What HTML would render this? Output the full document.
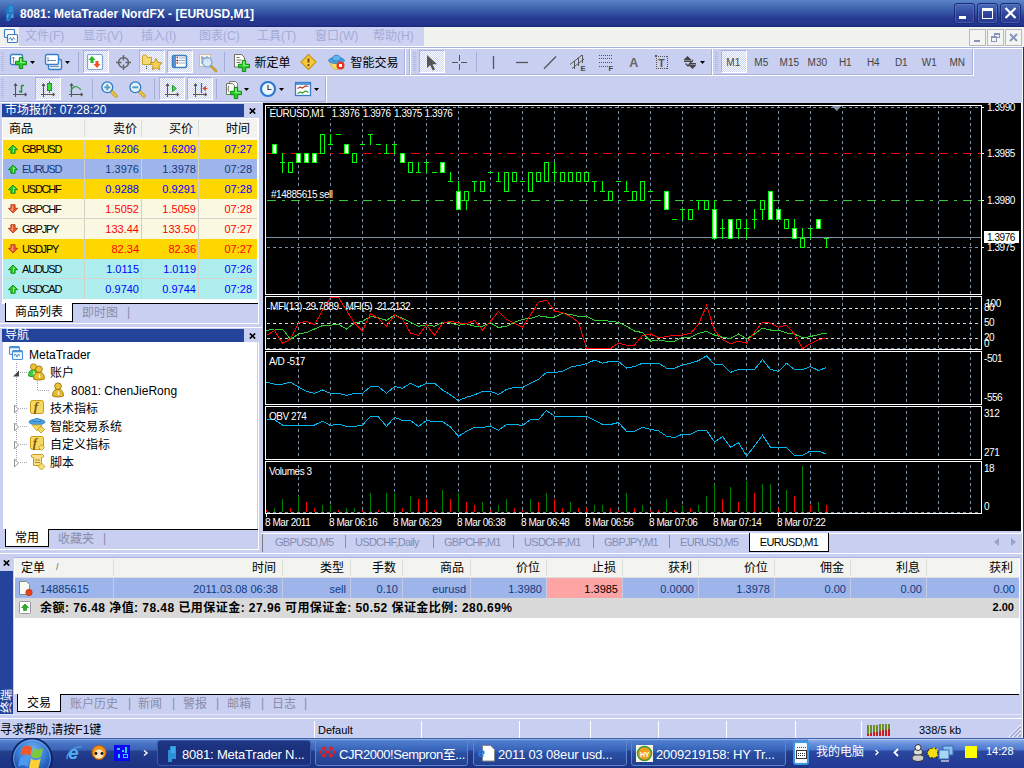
<!DOCTYPE html><html lang="zh"><head><meta charset="utf-8"><title>8081: MetaTrader NordFX - [EURUSD,M1]</title><style>
*{box-sizing:border-box;margin:0;padding:0}
html,body{width:1024px;height:768px;overflow:hidden;background:#c8cff1}
body{position:relative;font-family:"Liberation Sans","Noto Sans CJK SC",sans-serif;font-size:11px;color:#000;line-height:1}
.a{position:absolute;white-space:nowrap}
.cj{font-size:12px}
.r{text-align:right}
#title{left:0;top:0;width:1024px;height:27px;background:linear-gradient(#5c84ca 0,#5079bf 3px,#4067b0 8px,#3558a6 12px,#2b4498 16px,#26378e 19px,#25358d 25px,#1c287c 26px,#1c287c 27px)}
#title .t{left:20px;top:8px;font-weight:bold;font-size:12px;color:#fff}
.wb{top:3px;width:21px;height:21px;border:1px solid #1c2a7c;border-radius:3px;background:linear-gradient(#4a6cb8,#2c4098 60%,#2a3a92);box-shadow:inset 0 0 0 1px rgba(130,160,225,.3)}
#menu{left:0;top:27px;width:1024px;height:20px;background:#f1f1ee}
#menu .lav{left:19px;top:0;width:405px;height:19px;background:#cdd2f3}
#menu span{position:absolute;top:3px;font-size:12px;color:#a3acd6}
.mb{top:2px;width:17px;height:17px;border:1px solid #b8b8bc;background:#f4f4f2}
.hl{background:#fff;height:1px}
.vl{background:#fff;width:1px}
.pressed{background:repeating-conic-gradient(#fff 0% 25%,#ccd2f2 0% 50%) 0 0/2px 2px;border:1px solid;border-color:#aab2de #fff #fff #aab2de}
.grip{width:3px;background:repeating-linear-gradient(#b2b9e2 0,#b2b9e2 1px,transparent 1px,transparent 2px)}
.sep{width:1px;background:#a4acd8}
.tf{color:#444;font-size:11px}
.ptitle{background:#23449a;color:#fff;font-size:12px;height:13px}
.ptitle span{position:absolute;left:3px;top:0px}
.hdr{background:#f3f3ef}
.mw .row{left:3px;width:254px;height:20px}
.mw .row div{position:absolute;top:5px}
.tabact{background:#fff;border:1px solid #000;border-top:none;font-size:12px;text-align:center}
.gray{color:#888ca8;font-size:12px}
.tree div{position:absolute;font-size:12px}
.term .c{position:absolute;top:0;height:100%;border-left:1px solid #d4d4d4}
.term .row div.t{position:absolute;top:5px}
.tb{top:740px;height:26px;border-radius:3px;border:1px solid #5a84cc;background:linear-gradient(#4e7ccc,#3562b8 40%,#2a50a4 50%,#22408e);color:#fff;font-size:13px;letter-spacing:-.2px}
.tb span{position:absolute;top:7px}
</style></head><body>
<div id="title" class="a"><svg class="a" style="left:4px;top:4px" width="12" height="18"><path d="M4 1h6v13h-4v3h-4v-12h2z" fill="#2478c4"/><path d="M5 2h4v6h-4z" fill="#2e8ed8"/><path d="M3 9h4v6h-4z" fill="#1f72bc"/><path d="M3.500 10.500h2M3.500 12h1.500M3.500 10.500v3.500M7 10.500l2 3.500M9 10.500l-2 3.500" stroke="#6ab8f0" stroke-width=".7" fill="none"/></svg><div class="a t">8081: MetaTrader NordFX - [EURUSD,M1]</div>
<div class="a wb" style="left:954px"><div class="a" style="left:4px;top:12px;width:7px;height:3px;background:#fff"></div></div>
<div class="a wb" style="left:977px"><div class="a" style="left:4px;top:4px;width:11px;height:11px;border:1px solid #fff;border-top-width:3px"></div></div>
<div class="a wb" style="left:1000px"><svg class="a" style="left:3px;top:3px" width="13" height="12"><path d="M1.5 1L11.5 11M11.5 1L1.5 11" stroke="#fff" stroke-width="2.2"/></svg></div>
</div>
<div class="a" style="left:1023px;top:27px;width:1px;height:711px;background:#1c2f8c"></div>
<div class="a" style="left:1022px;top:47px;width:1px;height:691px;background:#f4f5fd"></div>
<div class="a" style="left:1021px;top:103px;width:1px;height:430px;background:#fff"></div>
<div id="menu" class="a"><div class="a lav"></div><svg class="a" style="left:3px;top:2px" width="16" height="16"><rect x="1.500" y=".5" width="10" height="8" rx="1" fill="#fff" stroke="#3b7ec8" stroke-width="1.200"/><rect x="4.500" y="5.500" width="10" height="8" rx="1" fill="#fff" stroke="#3b7ec8" stroke-width="1.200"/><path d="M6 10.500l1.500-2l1.500 3l1.500-3l1.500 2" stroke="#3b7ec8" fill="none" stroke-width=".9"/></svg>
<span style="left:25px">文件(F)</span>
<span style="left:83px">显示(V)</span>
<span style="left:141px">插入(I)</span>
<span style="left:199px">图表(C)</span>
<span style="left:257px">工具(T)</span>
<span style="left:315px">窗口(W)</span>
<span style="left:373px">帮助(H)</span>
<div class="a mb" style="left:969px"><div class="a" style="left:4px;top:10px;width:6px;height:2px;background:#8a96b8"></div></div>
<div class="a mb" style="left:987px"><div class="a" style="left:6px;top:3px;width:6px;height:5px;border:1px solid #8a96b8;border-top-width:2px"></div><div class="a" style="left:3px;top:6px;width:6px;height:6px;border:1px solid #8a96b8;border-top-width:2px;background:#f4f4f2"></div></div>
<div class="a mb" style="left:1005px"><svg class="a" style="left:3px;top:3px" width="9" height="9"><path d="M1 1L8 8M8 1L1 8" stroke="#8a96b8" stroke-width="2"/></svg></div>
</div>
<div class="a hl" style="left:0;top:46px;width:1023px"></div>
<div class="a" style="left:0;top:47px;width:1023px;height:1px;background:#aab1de"></div><div class="a hl" style="left:0;top:48px;width:1023px"></div><div class="a" style="left:0;top:74px;width:973px;height:1px;background:#aab1de"></div><div class="a" style="left:0;top:101px;width:326px;height:1px;background:#aab1de"></div><div class="a" style="left:404px;top:49px;width:1px;height:26px;background:#aab1de"></div><div class="a" style="left:409px;top:49px;width:1px;height:26px;background:#aab1de"></div><div class="a" style="left:711px;top:49px;width:1px;height:26px;background:#aab1de"></div><div class="a" style="left:972px;top:49px;width:1px;height:26px;background:#aab1de"></div><div class="a" style="left:325px;top:76px;width:1px;height:26px;background:#aab1de"></div><div class="a vl" style="left:410px;top:49px;height:26px"></div><div class="a hl" style="left:0;top:75px;width:974px"></div><div class="a hl" style="left:0;top:102px;width:262px"></div><div class="a vl" style="left:405px;top:48px;height:28px"></div><div class="a vl" style="left:712px;top:48px;height:28px"></div><div class="a vl" style="left:973px;top:48px;height:28px"></div><div class="a vl" style="left:326px;top:76px;height:27px"></div><div class="a grip" style="left:1px;top:52px;height:20px"></div><div class="a grip" style="left:413px;top:52px;height:20px"></div><div class="a grip" style="left:715px;top:52px;height:20px"></div><div class="a grip" style="left:1px;top:79px;height:20px"></div><div class="a pressed" style="left:83px;top:50px;width:26px;height:23px"></div><div class="a pressed" style="left:139px;top:50px;width:26px;height:23px"></div><div class="a pressed" style="left:167px;top:50px;width:26px;height:23px"></div><div class="a pressed" style="left:419px;top:50px;width:26px;height:23px"></div><div class="a pressed" style="left:721px;top:50px;width:26px;height:23px"></div><div class="a pressed" style="left:35px;top:77px;width:26px;height:23px"></div><div class="a pressed" style="left:159px;top:77px;width:26px;height:23px"></div><div class="a pressed" style="left:187px;top:77px;width:26px;height:23px"></div><svg class="a" style="left:0;top:0" width="1024" height="110" viewBox="0 0 1024 110" font-family="'Liberation Sans',sans-serif"><g transform="translate(10,54)"><rect x=".5" y=".5" width="12" height="10" rx="1.5" fill="#fff" stroke="#3b7ec8" stroke-width="1.4"/><path d="M3.5 3v6M2 4.5l1.5-1.5l1.5 1.5" stroke="#6a8ab8" fill="none"/></g><g transform="translate(21,63) scale(1.0)"><path d="M-1.700 -5.500h3.400v3.800h3.800v3.400h-3.800v3.800h-3.400v-3.800h-3.800v-3.400h3.800z" fill="#2bd02b" stroke="#0f8f0f" stroke-width="1" stroke-linejoin="miter"/><path d="M-.9 -4.700h1.500v3.800h3.800v.9h-5.300z" fill="#86f086" stroke="none"/></g><path d="M30 61h5l-2.500 3z" fill="#000"/><g transform="translate(45,54)"><rect x="3.5" y="5.500" width="13" height="10" rx="1.5" fill="#e8f0fa" stroke="#3b7ec8" stroke-width="1.4"/><rect x=".5" y=".5" width="13" height="10" rx="1.5" fill="#fff" stroke="#3b7ec8" stroke-width="1.4"/><path d="M3 3v5M3 6.500h8M5 12.500h9" stroke="#6a8ab8" fill="none"/></g><path d="M65 61h5l-2.500 3z" fill="#000"/><g transform="translate(87,54)"><rect x=".5" y=".5" width="15" height="15" rx="1.5" fill="#fdfdfd" stroke="#7aa6d8" stroke-width="1.2"/><path d="M5 2l3.500 4h-2v3h-3v-3h-2z" fill="#22b422"/><path d="M10 14l-3.500 -4h2v-3h3v3h2z" fill="#f0502a"/></g><g stroke="#666" fill="none" stroke-width="1.4"><circle cx="123.500" cy="62.500" r="5"/><path d="M123.500 55v5.500M123.500 64.500v5.500M116 62.500h5.500M125.500 62.500h5.500"/></g><g transform="translate(142,53)"><path d="M.5 4.500v7h9v-7h-4l-1.500 -2.500h-2.500l-1 1z" fill="#f6d977" stroke="#c9a227"/><path d="M4.500 13v4" stroke="#555" stroke-dasharray="1 1"/><path d="M14 5.500l1.800 3.800l4.200 .5l-3.100 2.900l.8 4.100l-3.700 -2l-3.700 2l.8 -4.100l-3.100 -2.900l4.200 -.5z" fill="#f5d04a" stroke="#b8901c" stroke-width=".9"/></g><g transform="translate(172,55)"><rect x=".5" y=".5" width="14" height="12" rx="1.5" fill="#fff" stroke="#3b7ec8" stroke-width="1.5"/><rect x="1" y="1" width="3" height="11" fill="#5a8fd0"/><path d="M6.500 3h7M6.500 5.500h7M6.500 8h7" stroke="#9ab"/><path d="M4.500 2.500h1.500M4.500 8h1.500" stroke="#e22" stroke-width="1.5"/><path d="M4.500 5.500h1.500" stroke="#222" stroke-width="1.500"/></g><g transform="translate(199,54)"><rect x=".5" y=".5" width="11" height="12" fill="#f8f6ee" stroke="#c8c0a8"/><path d="M3 2v8M8 2v6M2 4h8" stroke="#7a8aa8" fill="none"/><path d="M12 12L17 17" stroke="#c9a227" stroke-width="2.800" stroke-linecap="round"/><circle cx="8.300" cy="8.300" r="4.700" fill="#cfe6f6" fill-opacity=".8" stroke="#6aa6e0" stroke-width="1.100"/></g><rect x="78" y="52" width="1" height="20" fill="#a4acd8"/><rect x="224" y="52" width="1" height="20" fill="#a4acd8"/><g transform="translate(234,54)"><path d="M.5 .5h7l3 3v9.500h-10z" fill="#fbfbf6" stroke="#6e6e68"/><path d="M2.500 3.500h3M2.500 6h5M2.500 8.500h4" stroke="#777"/></g><g transform="translate(244,66) scale(1.0)"><path d="M-1.700 -5.500h3.400v3.800h3.800v3.400h-3.800v3.800h-3.400v-3.800h-3.800v-3.400h3.800z" fill="#2bd02b" stroke="#0f8f0f" stroke-width="1" stroke-linejoin="miter"/><path d="M-.9 -4.700h1.500v3.800h3.800v.9h-5.300z" fill="#86f086" stroke="none"/></g><text x="254.5" y="66.500" font-size="12px" font-family="'Liberation Sans','Noto Sans CJK SC',sans-serif" fill="#000">新定单</text><g transform="translate(308.500,62)"><path d="M0 -7.500L7.500 0L0 7.500L-7.500 0z" fill="#f7c93a" stroke="#c89a18" stroke-width="1.200" stroke-linejoin="round"/><path d="M0 -3.500v4" stroke="#6a4a10" stroke-width="2"/><circle cx="0" cy="3.200" r="1.100" fill="#6a4a10"/></g><g transform="translate(328,54)"><path d="M2.500 8.500c0 4 3 7 6 7s6-3 6-7z" fill="#f7d860" stroke="#d0a828" stroke-width=".8"/><ellipse cx="8.500" cy="6.500" rx="8" ry="3" fill="#4aa0e0" stroke="#2a78c0" stroke-width=".8"/><path d="M4 6c0-6.500 9-6.500 9 0c-2 1.200-7 1.200-9 0z" fill="#62b4ee" stroke="#2a78c0" stroke-width=".800"/><circle cx="12.500" cy="11.500" r="4" fill="#e43820"/><rect x="11" y="10" width="3" height="3" fill="#fff"/></g><text x="350.5" y="66.500" font-size="12px" font-family="'Liberation Sans','Noto Sans CJK SC',sans-serif" fill="#000">智能交易</text><path d="M427 55v13l3.200-3l2.500 5.500l2.300-1l-2.500-5.300h4.500z" fill="#555"/><path d="M459.500 55v6M459.500 64v6M452 62.500h6M461 62.500h6" stroke="#555" stroke-width="1"/><rect x="476" y="52" width="1" height="20" fill="#a4acd8"/><path d="M493.500 56v13" stroke="#555" stroke-width="1.300"/><path d="M516 62.500h12" stroke="#555" stroke-width="1.300"/><path d="M544 68.700L556 56.500" stroke="#555" stroke-width="1.300"/><g stroke="#555" stroke-width="1" fill="none"><path d="M570 64.500L582 55M572 68.500L584 59M574.500 61v8M578.500 58v8M582.500 55v8" /></g><text x="580.500" y="70.700" font-size="7.500px" font-weight="bold" fill="#444">E</text><g stroke="#555" stroke-dasharray="1 1"><path d="M599 55.500h13M599 58.500h13M599 62.500h13M599 66.500h9"/></g><text x="608.500" y="70.700" font-size="7.500px" font-weight="bold" fill="#444">F</text><text x="629.3" y="67" font-size="12.5px" font-weight="bold" fill="#666">A</text><path d="M656 56.500h12M656 68.500h12M656.500 56v13M667.500 56v13" fill="none" stroke="#555" stroke-dasharray="1 1"/><rect x="655" y="55" width="2" height="2" fill="#555"/><text x="658.2" y="66.500" font-size="10.5px" font-weight="bold" fill="#555">T</text><g fill="#444"><path d="M687.500 56l4 4h-8z"/><path d="M684 60.500h7v1.500h-7z"/><path d="M692.500 69l-4-4h8z"/><path d="M689 63h7v1.500h-7z"/><path d="M685.500 63.500l2.500 2.500l5-6" stroke="#444" fill="none" stroke-width="1.300"/></g><path d="M700 61h5l-2.500 3z" fill="#000"/><text x="733.3" y="66" font-size="10px" text-anchor="middle" fill="#444">M1</text><text x="761.3" y="66" font-size="10px" text-anchor="middle" fill="#444">M5</text><text x="789.3" y="66" font-size="10px" text-anchor="middle" fill="#444">M15</text><text x="817.3" y="66" font-size="10px" text-anchor="middle" fill="#444">M30</text><text x="845.3" y="66" font-size="10px" text-anchor="middle" fill="#444">H1</text><text x="873.3" y="66" font-size="10px" text-anchor="middle" fill="#444">H4</text><text x="901.3" y="66" font-size="10px" text-anchor="middle" fill="#444">D1</text><text x="929.3" y="66" font-size="10px" text-anchor="middle" fill="#444">W1</text><text x="957.3" y="66" font-size="10px" text-anchor="middle" fill="#444">MN</text><g transform="translate(13,83)" stroke="#555" fill="none" stroke-width="1.1"><path d="M2.500 0.800V14M0 11.500H13.500M1 2.800L2.500 0.800L4 2.800M11.800 10L13.500 11.500L11.800 13" shape-rendering="auto"/></g><path d="M21.500 85v8M21.500 85.500h2.500M21.500 91.500h-2.500" stroke="#1c9a1c" stroke-width="1.400" fill="none"/><g transform="translate(41,83)" stroke="#555" fill="none" stroke-width="1.1"><path d="M2.500 0.800V14M0 11.500H13.500M1 2.800L2.500 0.800L4 2.800M11.800 10L13.500 11.500L11.800 13" shape-rendering="auto"/></g><path d="M49.500 81v12" stroke="#1c9a1c"/><rect x="47.500" y="83.500" width="4" height="7" fill="#3fdc3f" stroke="#1c9a1c"/><g transform="translate(69,83)" stroke="#555" fill="none" stroke-width="1.1"><path d="M2.500 0.800V14M0 11.500H13.500M1 2.800L2.500 0.800L4 2.800M11.800 10L13.500 11.500L11.800 13" shape-rendering="auto"/></g><path d="M70.500 91.500c2.500-5.500 6-7 10.500-1.500" stroke="#2e9e2e" stroke-width="1.100" fill="none"/><g transform="translate(101,81)"><path d="M10.500 10.500L15 15" stroke="#b89020" stroke-width="3.400" stroke-linecap="round"/><path d="M10.500 10.500L15 15" stroke="#ecc83c" stroke-width="2" stroke-linecap="round"/><circle cx="6.300" cy="6.300" r="5.400" fill="#e4f5fa" stroke="#2f78c8" stroke-width="1.300"/><path d="M3.300 6.300h6" stroke="#5a9cc4" stroke-width="2"/><path d="M6.300 3.300v6" stroke="#5a9cc4" stroke-width="2"/></g><g transform="translate(129,81)"><path d="M10.500 10.500L15 15" stroke="#b89020" stroke-width="3.400" stroke-linecap="round"/><path d="M10.500 10.500L15 15" stroke="#ecc83c" stroke-width="2" stroke-linecap="round"/><circle cx="6.300" cy="6.300" r="5.400" fill="#e4f5fa" stroke="#2f78c8" stroke-width="1.300"/><path d="M3.300 6.300h6" stroke="#5a9cc4" stroke-width="2"/></g><rect x="92" y="79" width="1" height="20" fill="#a4acd8"/><rect x="154" y="79" width="1" height="20" fill="#a4acd8"/><rect x="216" y="79" width="1" height="20" fill="#a4acd8"/><g transform="translate(165,83)" stroke="#555" fill="none" stroke-width="1.1"><path d="M2.500 0.800V14M0 11.500H13.500M1 2.800L2.500 0.800L4 2.800M11.800 10L13.500 11.500L11.800 13" shape-rendering="auto"/></g><path d="M172.500 85.500l3.800 3l-3.800 3z" fill="#5ad85a" stroke="#16961a" stroke-width="1"/><g transform="translate(193,83)" stroke="#555" fill="none" stroke-width="1.1"><path d="M2.500 0.800V14M0 11.500H13.500M1 2.800L2.500 0.800L4 2.800M11.800 10L13.500 11.500L11.800 13" shape-rendering="auto"/></g><path d="M201.500 83v10" stroke="#2a6ab8" stroke-width="1.300"/><path d="M207.500 88.500h-4M205.500 86.500l-2.500 2l2.500 2z" stroke="#e0481a" fill="#e0481a" stroke-width="1"/><g transform="translate(226,81)"><path d="M3.500 .5h6l2 2v9h-8z" fill="#fbfbf6" stroke="#77776e"/><path d="M.5 2.500h6l2 2v9h-8z" fill="#fbfbf6" stroke="#77776e"/><path d="M3 5c-1 0-1 5 0 6" stroke="#666" fill="none"/></g><g transform="translate(236,93) scale(1.0)"><path d="M-1.700 -5.500h3.400v3.800h3.800v3.400h-3.800v3.800h-3.400v-3.800h-3.800v-3.400h3.800z" fill="#2bd02b" stroke="#0f8f0f" stroke-width="1" stroke-linejoin="miter"/><path d="M-.9 -4.700h1.500v3.800h3.800v.9h-5.300z" fill="#86f086" stroke="none"/></g><path d="M244 88h5l-2.500 3z" fill="#000"/><circle cx="268" cy="89" r="7" fill="#eef6fc" stroke="#2a7ad0" stroke-width="2.200"/><path d="M268 85v4.500h3.500" stroke="#444" fill="none" stroke-width="1.200"/><path d="M279 88h5l-2.500 3z" fill="#000"/><g transform="translate(295,82)"><rect x=".5" y=".5" width="15" height="13" fill="#fff" stroke="#3b7ec8" stroke-width="1.300"/><rect x="1" y="1" width="14" height="2" fill="#5a98dc"/><path d="M2.500 6.500l3-1.500l2 1l3-2l3 .500" stroke="#b83a2a" fill="none" stroke-width="1.200"/><path d="M2.500 11.500l3-1.500l2 1l3-2l3 1.500" stroke="#2e9e2e" fill="none" stroke-width="1.200"/></g><path d="M314 88h5l-2.500 3z" fill="#000"/></svg>
<div class="a mw" style="left:0;top:102px;width:263px;height:224px">
<div class="a ptitle" style="left:2px;top:2px;width:242px"><span>市场报价: 07:28:20</span></div>
<div class="a" style="left:249px;top:6px"><svg width="7" height="6" style="display:block"><path d="M.8 .5L6.200 5.500M6.200 .5L.8 5.500" stroke="#000" stroke-width="1.700"/></svg></div>
<div class="a" style="left:2px;top:16px;width:257px;height:186px;background:#fff"></div>
<div class="a hdr cj" style="left:3px;top:17px;width:254px;height:19px"><div class="a" style="left:6px;top:4px">商品</div><div class="a r" style="left:82px;width:52px;top:4px">卖价</div><div class="a r" style="left:139px;width:51px;top:4px">买价</div><div class="a r" style="left:196px;width:51px;top:4px">时间</div>
<div class="a" style="left:81px;top:1px;width:1px;height:17px;background:#dcdcd8"></div>
<div class="a" style="left:138px;top:1px;width:1px;height:17px;background:#dcdcd8"></div>
<div class="a" style="left:195px;top:1px;width:1px;height:17px;background:#dcdcd8"></div>
</div>
<div class="a row" style="top:37px;height:20px;background:#ffd700;color:#0000ff"><svg class="a" style="left:4px;top:5px" width="12" height="11"><path d="M6 1l4.700 4.700h-2.600v3.600h-4.200v-3.600h-2.600z" fill="#2cc02c" stroke="#128a12" stroke-width=".9"/><path d="M6 2.500l2.500 2.500h-1.500v3.500h-1z" fill="#8af08a"/></svg><div style="left:19px;color:#000;letter-spacing:-1.2px">GBPUSD</div><div class="r" style="left:82px;width:54px">1.6206</div><div class="r" style="left:139px;width:54px">1.6209</div><div class="r" style="left:196px;width:53px">07:27</div>
<div style="left:81px;top:0;width:1px;height:20px;background:#d0d0c8"></div>
<div style="left:138px;top:0;width:1px;height:20px;background:#d0d0c8"></div>
<div style="left:195px;top:0;width:1px;height:20px;background:#d0d0c8"></div>
</div>
<div class="a row" style="top:57px;height:20px;background:#9db5ea;color:#14387e"><svg class="a" style="left:4px;top:5px" width="12" height="11"><path d="M6 1l4.700 4.700h-2.600v3.600h-4.200v-3.600h-2.600z" fill="#2cc02c" stroke="#128a12" stroke-width=".9"/><path d="M6 2.500l2.500 2.500h-1.500v3.500h-1z" fill="#8af08a"/></svg><div style="left:19px;color:#14387e;letter-spacing:-1.2px">EURUSD</div><div class="r" style="left:82px;width:54px">1.3976</div><div class="r" style="left:139px;width:54px">1.3978</div><div class="r" style="left:196px;width:53px">07:28</div>
<div style="left:81px;top:0;width:1px;height:20px;background:#d0d0c8"></div>
<div style="left:138px;top:0;width:1px;height:20px;background:#d0d0c8"></div>
<div style="left:195px;top:0;width:1px;height:20px;background:#d0d0c8"></div>
</div>
<div class="a row" style="top:77px;height:20px;background:#ffd700;color:#0000ff"><svg class="a" style="left:4px;top:5px" width="12" height="11"><path d="M6 1l4.700 4.700h-2.600v3.600h-4.200v-3.600h-2.600z" fill="#2cc02c" stroke="#128a12" stroke-width=".9"/><path d="M6 2.500l2.500 2.500h-1.500v3.500h-1z" fill="#8af08a"/></svg><div style="left:19px;color:#000;letter-spacing:-1.2px">USDCHF</div><div class="r" style="left:82px;width:54px">0.9288</div><div class="r" style="left:139px;width:54px">0.9291</div><div class="r" style="left:196px;width:53px">07:28</div>
<div style="left:81px;top:0;width:1px;height:20px;background:#d0d0c8"></div>
<div style="left:138px;top:0;width:1px;height:20px;background:#d0d0c8"></div>
<div style="left:195px;top:0;width:1px;height:20px;background:#d0d0c8"></div>
</div>
<div class="a row" style="top:97px;height:20px;background:#fbf8e2;color:#ff0000"><svg class="a" style="left:4px;top:4px" width="12" height="11"><path d="M6 10l4.700-4.700h-2.600v-3.600h-4.200v3.600h-2.600z" fill="#f0582a" stroke="#b83a12" stroke-width=".9"/><path d="M6 8.500l-2.500-2.500h1.500v-3.500h1z" fill="#f8a080"/></svg><div style="left:19px;color:#000;letter-spacing:-1.2px">GBPCHF</div><div class="r" style="left:82px;width:54px">1.5052</div><div class="r" style="left:139px;width:54px">1.5059</div><div class="r" style="left:196px;width:53px">07:28</div>
<div style="left:81px;top:0;width:1px;height:20px;background:#d0d0c8"></div>
<div style="left:138px;top:0;width:1px;height:20px;background:#d0d0c8"></div>
<div style="left:195px;top:0;width:1px;height:20px;background:#d0d0c8"></div>
<div style="left:0;top:19px;width:254px;height:1px;background:#d4d4d0"></div>
</div>
<div class="a row" style="top:117px;height:20px;background:#fbf8e2;color:#ff0000"><svg class="a" style="left:4px;top:4px" width="12" height="11"><path d="M6 10l4.700-4.700h-2.600v-3.600h-4.200v3.600h-2.600z" fill="#f0582a" stroke="#b83a12" stroke-width=".9"/><path d="M6 8.500l-2.500-2.500h1.500v-3.500h1z" fill="#f8a080"/></svg><div style="left:19px;color:#000;letter-spacing:-1.2px">GBPJPY</div><div class="r" style="left:82px;width:54px">133.44</div><div class="r" style="left:139px;width:54px">133.50</div><div class="r" style="left:196px;width:53px">07:27</div>
<div style="left:81px;top:0;width:1px;height:20px;background:#d0d0c8"></div>
<div style="left:138px;top:0;width:1px;height:20px;background:#d0d0c8"></div>
<div style="left:195px;top:0;width:1px;height:20px;background:#d0d0c8"></div>
</div>
<div class="a row" style="top:137px;height:20px;background:#ffd700;color:#ff0000"><svg class="a" style="left:4px;top:4px" width="12" height="11"><path d="M6 10l4.700-4.700h-2.600v-3.600h-4.200v3.600h-2.600z" fill="#f0582a" stroke="#b83a12" stroke-width=".9"/><path d="M6 8.500l-2.500-2.500h1.500v-3.500h1z" fill="#f8a080"/></svg><div style="left:19px;color:#000;letter-spacing:-1.2px">USDJPY</div><div class="r" style="left:82px;width:54px">82.34</div><div class="r" style="left:139px;width:54px">82.36</div><div class="r" style="left:196px;width:53px">07:27</div>
<div style="left:81px;top:0;width:1px;height:20px;background:#d0d0c8"></div>
<div style="left:138px;top:0;width:1px;height:20px;background:#d0d0c8"></div>
<div style="left:195px;top:0;width:1px;height:20px;background:#d0d0c8"></div>
</div>
<div class="a row" style="top:157px;height:20px;background:#aeeeee;color:#0000ff"><svg class="a" style="left:4px;top:5px" width="12" height="11"><path d="M6 1l4.700 4.700h-2.600v3.600h-4.200v-3.600h-2.600z" fill="#2cc02c" stroke="#128a12" stroke-width=".9"/><path d="M6 2.500l2.500 2.500h-1.500v3.500h-1z" fill="#8af08a"/></svg><div style="left:19px;color:#000;letter-spacing:-1.2px">AUDUSD</div><div class="r" style="left:82px;width:54px">1.0115</div><div class="r" style="left:139px;width:54px">1.0119</div><div class="r" style="left:196px;width:53px">07:26</div>
<div style="left:81px;top:0;width:1px;height:20px;background:#d0d0c8"></div>
<div style="left:138px;top:0;width:1px;height:20px;background:#d0d0c8"></div>
<div style="left:195px;top:0;width:1px;height:20px;background:#d0d0c8"></div>
<div style="left:0;top:19px;width:254px;height:1px;background:#d4d4d0"></div>
</div>
<div class="a row" style="top:177px;height:20px;background:#aeeeee;color:#0000ff"><svg class="a" style="left:4px;top:5px" width="12" height="11"><path d="M6 1l4.700 4.700h-2.600v3.600h-4.200v-3.600h-2.600z" fill="#2cc02c" stroke="#128a12" stroke-width=".9"/><path d="M6 2.500l2.500 2.500h-1.500v3.500h-1z" fill="#8af08a"/></svg><div style="left:19px;color:#000;letter-spacing:-1.2px">USDCAD</div><div class="r" style="left:82px;width:54px">0.9740</div><div class="r" style="left:139px;width:54px">0.9744</div><div class="r" style="left:196px;width:53px">07:28</div>
<div style="left:81px;top:0;width:1px;height:20px;background:#d0d0c8"></div>
<div style="left:138px;top:0;width:1px;height:20px;background:#d0d0c8"></div>
<div style="left:195px;top:0;width:1px;height:20px;background:#d0d0c8"></div>
</div>
<div class="a" style="left:3px;top:37px;width:254px;height:1px;background:#f3f3ef"></div>
<div class="a" style="left:72px;top:201px;width:186px;height:1px;background:#000"></div>
<div class="a tabact" style="left:5px;top:201px;width:68px;height:19px;padding-top:3px">商品列表</div>
<div class="a gray" style="left:82px;top:205px">即时图</div><div class="a gray" style="left:127px;top:204px">|</div>
</div>
<div class="a vl" style="left:258px;top:118px;height:206px"></div><div class="a hl" style="left:0;top:323px;width:259px"></div><div class="a hl" style="left:0;top:327px;width:262px"></div><div class="a vl" style="left:258px;top:342px;height:208px"></div><div class="a hl" style="left:0;top:549px;width:259px"></div>
<div class="a" style="left:0;top:326px;width:263px;height:226px">
<div class="a ptitle" style="left:2px;top:3px;width:242px"><span>导航</span></div>
<div class="a" style="left:249px;top:7px"><svg width="7" height="6" style="display:block"><path d="M.8 .5L6.200 5.500M6.200 .5L.8 5.500" stroke="#000" stroke-width="1.700"/></svg></div>
<div class="a" style="left:3px;top:16px;width:254px;height:187px;background:#fff"></div>
<div class="tree"><svg class="a" style="left:0;top:0" width="263" height="226" viewBox="0 0 263 226"><g stroke="#a8a8b4" stroke-dasharray="1 1" fill="none"><path d="M16.500 37v100M20 46.500h7M37.500 55v9.500h12M20 82.500h7M20 100.500h7M20 118.500h7M20 136.500h7"/></g><g transform="translate(9,20)"><rect x=".5" y=".5" width="10" height="8" rx="1" fill="#f0f7fd" stroke="#4a90d8" stroke-width="1.100"/><path d="M1 1.500h9" stroke="#4a90d8" stroke-width="1.500"/><rect x="3.500" y="4.500" width="10" height="9" rx="1" fill="#f6fbff" stroke="#4a90d8" stroke-width="1.100"/><path d="M4 5.500h9" stroke="#4a90d8" stroke-width="1.500"/><path d="M5 10l1.500-2l1.500 3l1.500-3l1.500 2" stroke="#3b7ec8" fill="none" stroke-width=".9"/></g><path d="M19 44.500v6h-6z" fill="#444"/><path d="M14.500 79l4 4l-4 4z" fill="#fff" stroke="#888" stroke-width=".9"/><path d="M14.500 97l4 4l-4 4z" fill="#fff" stroke="#888" stroke-width=".9"/><path d="M14.500 115l4 4l-4 4z" fill="#fff" stroke="#888" stroke-width=".9"/><path d="M14.500 133l4 4l-4 4z" fill="#fff" stroke="#888" stroke-width=".9"/><g transform="translate(28,37) scale(0.92)"><path d="M.6 14C.6 8.800 2.800 7.300 6 7.300C9.200 7.300 11.400 8.800 11.400 14C9 15.300 3 15.300 .6 14z" fill="#3ccc3c" stroke="#1e8a1e" stroke-width=".9"/><circle cx="6" cy="4.200" r="3.300" fill="#ecc436" stroke="#9a7208" stroke-width=".9"/><path d="M6 8l1.600 3.800l-1.600 1.600l-.3-3z" fill="#fff8d8"/></g><g transform="translate(33,39) scale(1.0)"><path d="M.6 14C.6 8.800 2.800 7.300 6 7.300C9.200 7.300 11.400 8.800 11.400 14C9 15.300 3 15.300 .6 14z" fill="#e6bc2c" stroke="#9a7208" stroke-width=".9"/><circle cx="6" cy="4.200" r="3.300" fill="#ecc436" stroke="#9a7208" stroke-width=".9"/><path d="M6 8l1.600 3.800l-1.600 1.600l-.3-3z" fill="#fff8d8"/></g><g transform="translate(52,56) scale(1.0)"><path d="M.6 14C.6 8.800 2.800 7.300 6 7.300C9.200 7.300 11.400 8.800 11.400 14C9 15.300 3 15.300 .6 14z" fill="#e6bc2c" stroke="#9a7208" stroke-width=".9"/><circle cx="6" cy="4.200" r="3.300" fill="#ecc436" stroke="#9a7208" stroke-width=".9"/><path d="M6 8l1.600 3.800l-1.600 1.600l-.3-3z" fill="#fff8d8"/></g><g transform="translate(30,74)"><rect x=".5" y=".5" width="13" height="13" rx="2" fill="#f7d860" stroke="#c89a18"/><text x="3.800" y="11" font-size="13px" font-style="italic" font-weight="bold" font-family="'Liberation Serif',serif" fill="#7a5a10">f</text></g><g transform="translate(29,91)"><ellipse cx="8" cy="5" rx="8" ry="2.800" fill="#4aa0e0" stroke="#2a78c0" stroke-width=".800"/><path d="M4 4.500c0-4 8-4 8 0z" fill="#5ab0ec" stroke="#2a78c0" stroke-width=".800"/><path d="M3 8l5 6l5-6z" fill="#f7d860" stroke="#d0a828" stroke-width=".800"/><path d="M12 9l3.500 3.500l-3.500 3.500l-3.500-3.500z" fill="#f7d860" stroke="#b8901c" stroke-width=".800"/></g><g transform="translate(30,110)"><rect x=".5" y=".5" width="13" height="13" rx="2" fill="#f7d860" stroke="#c89a18"/><text x="2.800" y="10.500" font-size="13px" font-style="italic" font-weight="bold" font-family="'Liberation Serif',serif" fill="#7a5a10">f</text><path d="M11.500 8.500l3 3l-3 3l-3-3z" fill="#f7e070" stroke="#b8901c" stroke-width=".800"/></g><g transform="translate(30,128)"><path d="M2.500 .5h10c1.500 0 1.500 3 0 3h-1v8h-8v-8h-1c-1.500 0-1.500-3 0-3z" fill="#f7e08a" stroke="#c89a18"/><path d="M5 6h5M5 8.500h5" stroke="#b8901c"/><path d="M11.500 9l3.500 3.500l-3.500 3.500l-3.500-3.500z" fill="#f7e070" stroke="#b8901c" stroke-width=".800"/></g></svg>
<div class="" style="left:29px;top:23px">MetaTrader</div>
<div class="cj" style="left:50px;top:41px">账户</div>
<div class="" style="left:71px;top:59px">8081: ChenJieRong</div>
<div class="cj" style="left:50px;top:77px">技术指标</div>
<div class="cj" style="left:50px;top:95px">智能交易系统</div>
<div class="cj" style="left:50px;top:113px">自定义指标</div>
<div class="cj" style="left:50px;top:131px">脚本</div>
</div>
<div class="a" style="left:48px;top:203px;width:210px;height:1px;background:#000"></div>
<div class="a tabact" style="left:5px;top:203px;width:44px;height:18px;padding-top:3px">常用</div>
<div class="a gray" style="left:58px;top:207px">收藏夹</div><div class="a gray" style="left:103px;top:206px">|</div>
</div>
<svg class="chart" width="1024" height="768" viewBox="0 0 1024 768" style="position:absolute;left:0;top:0" shape-rendering="crispEdges" font-family="'Liberation Sans',sans-serif" font-size="10px" letter-spacing="-0.45px" fill="#fff">
<rect x="263" y="103" width="758" height="428" fill="#000"/>
<line x1="298.5" y1="106" x2="298.5" y2="294" stroke="#7890a8" stroke-dasharray="3 3" stroke-dashoffset="1"/>
<line x1="330.5" y1="106" x2="330.5" y2="294" stroke="#7890a8" stroke-dasharray="3 3" stroke-dashoffset="1"/>
<line x1="362.5" y1="106" x2="362.5" y2="294" stroke="#7890a8" stroke-dasharray="3 3" stroke-dashoffset="1"/>
<line x1="394.5" y1="106" x2="394.5" y2="294" stroke="#7890a8" stroke-dasharray="3 3" stroke-dashoffset="1"/>
<line x1="426.5" y1="106" x2="426.5" y2="294" stroke="#7890a8" stroke-dasharray="3 3" stroke-dashoffset="1"/>
<line x1="458.5" y1="106" x2="458.5" y2="294" stroke="#7890a8" stroke-dasharray="3 3" stroke-dashoffset="1"/>
<line x1="490.5" y1="106" x2="490.5" y2="294" stroke="#7890a8" stroke-dasharray="3 3" stroke-dashoffset="1"/>
<line x1="522.5" y1="106" x2="522.5" y2="294" stroke="#7890a8" stroke-dasharray="3 3" stroke-dashoffset="1"/>
<line x1="554.5" y1="106" x2="554.5" y2="294" stroke="#7890a8" stroke-dasharray="3 3" stroke-dashoffset="1"/>
<line x1="586.5" y1="106" x2="586.5" y2="294" stroke="#7890a8" stroke-dasharray="3 3" stroke-dashoffset="1"/>
<line x1="618.5" y1="106" x2="618.5" y2="294" stroke="#7890a8" stroke-dasharray="3 3" stroke-dashoffset="1"/>
<line x1="650.5" y1="106" x2="650.5" y2="294" stroke="#7890a8" stroke-dasharray="3 3" stroke-dashoffset="1"/>
<line x1="682.5" y1="106" x2="682.5" y2="294" stroke="#7890a8" stroke-dasharray="3 3" stroke-dashoffset="1"/>
<line x1="714.5" y1="106" x2="714.5" y2="294" stroke="#7890a8" stroke-dasharray="3 3" stroke-dashoffset="1"/>
<line x1="746.5" y1="106" x2="746.5" y2="294" stroke="#7890a8" stroke-dasharray="3 3" stroke-dashoffset="1"/>
<line x1="778.5" y1="106" x2="778.5" y2="294" stroke="#7890a8" stroke-dasharray="3 3" stroke-dashoffset="1"/>
<line x1="810.5" y1="106" x2="810.5" y2="294" stroke="#7890a8" stroke-dasharray="3 3" stroke-dashoffset="1"/>
<line x1="842.5" y1="106" x2="842.5" y2="294" stroke="#7890a8" stroke-dasharray="3 3" stroke-dashoffset="1"/>
<line x1="874.5" y1="106" x2="874.5" y2="294" stroke="#7890a8" stroke-dasharray="3 3" stroke-dashoffset="1"/>
<line x1="906.5" y1="106" x2="906.5" y2="294" stroke="#7890a8" stroke-dasharray="3 3" stroke-dashoffset="1"/>
<line x1="938.5" y1="106" x2="938.5" y2="294" stroke="#7890a8" stroke-dasharray="3 3" stroke-dashoffset="1"/>
<line x1="970.5" y1="106" x2="970.5" y2="294" stroke="#7890a8" stroke-dasharray="3 3" stroke-dashoffset="1"/>
<line x1="298.5" y1="297" x2="298.5" y2="349" stroke="#7890a8" stroke-dasharray="3 3" stroke-dashoffset="0"/>
<line x1="330.5" y1="297" x2="330.5" y2="349" stroke="#7890a8" stroke-dasharray="3 3" stroke-dashoffset="0"/>
<line x1="362.5" y1="297" x2="362.5" y2="349" stroke="#7890a8" stroke-dasharray="3 3" stroke-dashoffset="0"/>
<line x1="394.5" y1="297" x2="394.5" y2="349" stroke="#7890a8" stroke-dasharray="3 3" stroke-dashoffset="0"/>
<line x1="426.5" y1="297" x2="426.5" y2="349" stroke="#7890a8" stroke-dasharray="3 3" stroke-dashoffset="0"/>
<line x1="458.5" y1="297" x2="458.5" y2="349" stroke="#7890a8" stroke-dasharray="3 3" stroke-dashoffset="0"/>
<line x1="490.5" y1="297" x2="490.5" y2="349" stroke="#7890a8" stroke-dasharray="3 3" stroke-dashoffset="0"/>
<line x1="522.5" y1="297" x2="522.5" y2="349" stroke="#7890a8" stroke-dasharray="3 3" stroke-dashoffset="0"/>
<line x1="554.5" y1="297" x2="554.5" y2="349" stroke="#7890a8" stroke-dasharray="3 3" stroke-dashoffset="0"/>
<line x1="586.5" y1="297" x2="586.5" y2="349" stroke="#7890a8" stroke-dasharray="3 3" stroke-dashoffset="0"/>
<line x1="618.5" y1="297" x2="618.5" y2="349" stroke="#7890a8" stroke-dasharray="3 3" stroke-dashoffset="0"/>
<line x1="650.5" y1="297" x2="650.5" y2="349" stroke="#7890a8" stroke-dasharray="3 3" stroke-dashoffset="0"/>
<line x1="682.5" y1="297" x2="682.5" y2="349" stroke="#7890a8" stroke-dasharray="3 3" stroke-dashoffset="0"/>
<line x1="714.5" y1="297" x2="714.5" y2="349" stroke="#7890a8" stroke-dasharray="3 3" stroke-dashoffset="0"/>
<line x1="746.5" y1="297" x2="746.5" y2="349" stroke="#7890a8" stroke-dasharray="3 3" stroke-dashoffset="0"/>
<line x1="778.5" y1="297" x2="778.5" y2="349" stroke="#7890a8" stroke-dasharray="3 3" stroke-dashoffset="0"/>
<line x1="810.5" y1="297" x2="810.5" y2="349" stroke="#7890a8" stroke-dasharray="3 3" stroke-dashoffset="0"/>
<line x1="842.5" y1="297" x2="842.5" y2="349" stroke="#7890a8" stroke-dasharray="3 3" stroke-dashoffset="0"/>
<line x1="874.5" y1="297" x2="874.5" y2="349" stroke="#7890a8" stroke-dasharray="3 3" stroke-dashoffset="0"/>
<line x1="906.5" y1="297" x2="906.5" y2="349" stroke="#7890a8" stroke-dasharray="3 3" stroke-dashoffset="0"/>
<line x1="938.5" y1="297" x2="938.5" y2="349" stroke="#7890a8" stroke-dasharray="3 3" stroke-dashoffset="0"/>
<line x1="970.5" y1="297" x2="970.5" y2="349" stroke="#7890a8" stroke-dasharray="3 3" stroke-dashoffset="0"/>
<line x1="298.5" y1="352" x2="298.5" y2="404" stroke="#7890a8" stroke-dasharray="3 3" stroke-dashoffset="1"/>
<line x1="330.5" y1="352" x2="330.5" y2="404" stroke="#7890a8" stroke-dasharray="3 3" stroke-dashoffset="1"/>
<line x1="362.5" y1="352" x2="362.5" y2="404" stroke="#7890a8" stroke-dasharray="3 3" stroke-dashoffset="1"/>
<line x1="394.5" y1="352" x2="394.5" y2="404" stroke="#7890a8" stroke-dasharray="3 3" stroke-dashoffset="1"/>
<line x1="426.5" y1="352" x2="426.5" y2="404" stroke="#7890a8" stroke-dasharray="3 3" stroke-dashoffset="1"/>
<line x1="458.5" y1="352" x2="458.5" y2="404" stroke="#7890a8" stroke-dasharray="3 3" stroke-dashoffset="1"/>
<line x1="490.5" y1="352" x2="490.5" y2="404" stroke="#7890a8" stroke-dasharray="3 3" stroke-dashoffset="1"/>
<line x1="522.5" y1="352" x2="522.5" y2="404" stroke="#7890a8" stroke-dasharray="3 3" stroke-dashoffset="1"/>
<line x1="554.5" y1="352" x2="554.5" y2="404" stroke="#7890a8" stroke-dasharray="3 3" stroke-dashoffset="1"/>
<line x1="586.5" y1="352" x2="586.5" y2="404" stroke="#7890a8" stroke-dasharray="3 3" stroke-dashoffset="1"/>
<line x1="618.5" y1="352" x2="618.5" y2="404" stroke="#7890a8" stroke-dasharray="3 3" stroke-dashoffset="1"/>
<line x1="650.5" y1="352" x2="650.5" y2="404" stroke="#7890a8" stroke-dasharray="3 3" stroke-dashoffset="1"/>
<line x1="682.5" y1="352" x2="682.5" y2="404" stroke="#7890a8" stroke-dasharray="3 3" stroke-dashoffset="1"/>
<line x1="714.5" y1="352" x2="714.5" y2="404" stroke="#7890a8" stroke-dasharray="3 3" stroke-dashoffset="1"/>
<line x1="746.5" y1="352" x2="746.5" y2="404" stroke="#7890a8" stroke-dasharray="3 3" stroke-dashoffset="1"/>
<line x1="778.5" y1="352" x2="778.5" y2="404" stroke="#7890a8" stroke-dasharray="3 3" stroke-dashoffset="1"/>
<line x1="810.5" y1="352" x2="810.5" y2="404" stroke="#7890a8" stroke-dasharray="3 3" stroke-dashoffset="1"/>
<line x1="842.5" y1="352" x2="842.5" y2="404" stroke="#7890a8" stroke-dasharray="3 3" stroke-dashoffset="1"/>
<line x1="874.5" y1="352" x2="874.5" y2="404" stroke="#7890a8" stroke-dasharray="3 3" stroke-dashoffset="1"/>
<line x1="906.5" y1="352" x2="906.5" y2="404" stroke="#7890a8" stroke-dasharray="3 3" stroke-dashoffset="1"/>
<line x1="938.5" y1="352" x2="938.5" y2="404" stroke="#7890a8" stroke-dasharray="3 3" stroke-dashoffset="1"/>
<line x1="970.5" y1="352" x2="970.5" y2="404" stroke="#7890a8" stroke-dasharray="3 3" stroke-dashoffset="1"/>
<line x1="298.5" y1="407" x2="298.5" y2="459" stroke="#7890a8" stroke-dasharray="3 3" stroke-dashoffset="2"/>
<line x1="330.5" y1="407" x2="330.5" y2="459" stroke="#7890a8" stroke-dasharray="3 3" stroke-dashoffset="2"/>
<line x1="362.5" y1="407" x2="362.5" y2="459" stroke="#7890a8" stroke-dasharray="3 3" stroke-dashoffset="2"/>
<line x1="394.5" y1="407" x2="394.5" y2="459" stroke="#7890a8" stroke-dasharray="3 3" stroke-dashoffset="2"/>
<line x1="426.5" y1="407" x2="426.5" y2="459" stroke="#7890a8" stroke-dasharray="3 3" stroke-dashoffset="2"/>
<line x1="458.5" y1="407" x2="458.5" y2="459" stroke="#7890a8" stroke-dasharray="3 3" stroke-dashoffset="2"/>
<line x1="490.5" y1="407" x2="490.5" y2="459" stroke="#7890a8" stroke-dasharray="3 3" stroke-dashoffset="2"/>
<line x1="522.5" y1="407" x2="522.5" y2="459" stroke="#7890a8" stroke-dasharray="3 3" stroke-dashoffset="2"/>
<line x1="554.5" y1="407" x2="554.5" y2="459" stroke="#7890a8" stroke-dasharray="3 3" stroke-dashoffset="2"/>
<line x1="586.5" y1="407" x2="586.5" y2="459" stroke="#7890a8" stroke-dasharray="3 3" stroke-dashoffset="2"/>
<line x1="618.5" y1="407" x2="618.5" y2="459" stroke="#7890a8" stroke-dasharray="3 3" stroke-dashoffset="2"/>
<line x1="650.5" y1="407" x2="650.5" y2="459" stroke="#7890a8" stroke-dasharray="3 3" stroke-dashoffset="2"/>
<line x1="682.5" y1="407" x2="682.5" y2="459" stroke="#7890a8" stroke-dasharray="3 3" stroke-dashoffset="2"/>
<line x1="714.5" y1="407" x2="714.5" y2="459" stroke="#7890a8" stroke-dasharray="3 3" stroke-dashoffset="2"/>
<line x1="746.5" y1="407" x2="746.5" y2="459" stroke="#7890a8" stroke-dasharray="3 3" stroke-dashoffset="2"/>
<line x1="778.5" y1="407" x2="778.5" y2="459" stroke="#7890a8" stroke-dasharray="3 3" stroke-dashoffset="2"/>
<line x1="810.5" y1="407" x2="810.5" y2="459" stroke="#7890a8" stroke-dasharray="3 3" stroke-dashoffset="2"/>
<line x1="842.5" y1="407" x2="842.5" y2="459" stroke="#7890a8" stroke-dasharray="3 3" stroke-dashoffset="2"/>
<line x1="874.5" y1="407" x2="874.5" y2="459" stroke="#7890a8" stroke-dasharray="3 3" stroke-dashoffset="2"/>
<line x1="906.5" y1="407" x2="906.5" y2="459" stroke="#7890a8" stroke-dasharray="3 3" stroke-dashoffset="2"/>
<line x1="938.5" y1="407" x2="938.5" y2="459" stroke="#7890a8" stroke-dasharray="3 3" stroke-dashoffset="2"/>
<line x1="970.5" y1="407" x2="970.5" y2="459" stroke="#7890a8" stroke-dasharray="3 3" stroke-dashoffset="2"/>
<line x1="298.5" y1="462" x2="298.5" y2="513" stroke="#7890a8" stroke-dasharray="3 3" stroke-dashoffset="3"/>
<line x1="330.5" y1="462" x2="330.5" y2="513" stroke="#7890a8" stroke-dasharray="3 3" stroke-dashoffset="3"/>
<line x1="362.5" y1="462" x2="362.5" y2="513" stroke="#7890a8" stroke-dasharray="3 3" stroke-dashoffset="3"/>
<line x1="394.5" y1="462" x2="394.5" y2="513" stroke="#7890a8" stroke-dasharray="3 3" stroke-dashoffset="3"/>
<line x1="426.5" y1="462" x2="426.5" y2="513" stroke="#7890a8" stroke-dasharray="3 3" stroke-dashoffset="3"/>
<line x1="458.5" y1="462" x2="458.5" y2="513" stroke="#7890a8" stroke-dasharray="3 3" stroke-dashoffset="3"/>
<line x1="490.5" y1="462" x2="490.5" y2="513" stroke="#7890a8" stroke-dasharray="3 3" stroke-dashoffset="3"/>
<line x1="522.5" y1="462" x2="522.5" y2="513" stroke="#7890a8" stroke-dasharray="3 3" stroke-dashoffset="3"/>
<line x1="554.5" y1="462" x2="554.5" y2="513" stroke="#7890a8" stroke-dasharray="3 3" stroke-dashoffset="3"/>
<line x1="586.5" y1="462" x2="586.5" y2="513" stroke="#7890a8" stroke-dasharray="3 3" stroke-dashoffset="3"/>
<line x1="618.5" y1="462" x2="618.5" y2="513" stroke="#7890a8" stroke-dasharray="3 3" stroke-dashoffset="3"/>
<line x1="650.5" y1="462" x2="650.5" y2="513" stroke="#7890a8" stroke-dasharray="3 3" stroke-dashoffset="3"/>
<line x1="682.5" y1="462" x2="682.5" y2="513" stroke="#7890a8" stroke-dasharray="3 3" stroke-dashoffset="3"/>
<line x1="714.5" y1="462" x2="714.5" y2="513" stroke="#7890a8" stroke-dasharray="3 3" stroke-dashoffset="3"/>
<line x1="746.5" y1="462" x2="746.5" y2="513" stroke="#7890a8" stroke-dasharray="3 3" stroke-dashoffset="3"/>
<line x1="778.5" y1="462" x2="778.5" y2="513" stroke="#7890a8" stroke-dasharray="3 3" stroke-dashoffset="3"/>
<line x1="810.5" y1="462" x2="810.5" y2="513" stroke="#7890a8" stroke-dasharray="3 3" stroke-dashoffset="3"/>
<line x1="842.5" y1="462" x2="842.5" y2="513" stroke="#7890a8" stroke-dasharray="3 3" stroke-dashoffset="3"/>
<line x1="874.5" y1="462" x2="874.5" y2="513" stroke="#7890a8" stroke-dasharray="3 3" stroke-dashoffset="3"/>
<line x1="906.5" y1="462" x2="906.5" y2="513" stroke="#7890a8" stroke-dasharray="3 3" stroke-dashoffset="3"/>
<line x1="938.5" y1="462" x2="938.5" y2="513" stroke="#7890a8" stroke-dasharray="3 3" stroke-dashoffset="3"/>
<line x1="970.5" y1="462" x2="970.5" y2="513" stroke="#7890a8" stroke-dasharray="3 3" stroke-dashoffset="3"/>
<line x1="266" y1="107.5" x2="981" y2="107.5" stroke="#7890a8" stroke-dasharray="3 3" stroke-dashoffset="5"/>
<line x1="266" y1="247.5" x2="981" y2="247.5" stroke="#7890a8" stroke-dasharray="3 3" stroke-dashoffset="5"/>
<line x1="266" y1="153.5" x2="981" y2="153.5" stroke="#7890a8" stroke-dasharray="3 3" stroke-dashoffset="5"/>
<line x1="266" y1="200.5" x2="981" y2="200.5" stroke="#7890a8" stroke-dasharray="3 3" stroke-dashoffset="5"/>
<line x1="266" y1="308.5" x2="981" y2="308.5" stroke="#d8d8d8" stroke-dasharray="3 3" stroke-dashoffset="5"/>
<line x1="266" y1="323.5" x2="981" y2="323.5" stroke="#d8d8d8" stroke-dasharray="3 3" stroke-dashoffset="5"/>
<line x1="266" y1="338.5" x2="981" y2="338.5" stroke="#d8d8d8" stroke-dasharray="3 3" stroke-dashoffset="5"/>
<line x1="266" y1="512.5" x2="981" y2="512.5" stroke="#7890a8" stroke-dasharray="3 3" stroke-dashoffset="5"/>
<line x1="266" y1="348.5" x2="981" y2="348.5" stroke="#7890a8" stroke-dasharray="3 3" stroke-dashoffset="5"/>
<line x1="266" y1="153.5" x2="981" y2="153.5" stroke="#000"/>
<line x1="267" y1="153.5" x2="981" y2="153.5" stroke="#ff0000" stroke-dasharray="9 6 3 6"/>
<line x1="266" y1="200.5" x2="981" y2="200.5" stroke="#000"/>
<line x1="267" y1="200.5" x2="981" y2="200.5" stroke="#32cd32" stroke-dasharray="9 6 3 6"/>
<line x1="266" y1="237.5" x2="981" y2="237.5" stroke="#8090a0"/>
<rect x="274" y="144" width="1" height="10" fill="#00ff00"/>
<rect x="272" y="144" width="5" height="10" fill="#00ff00"/>
<rect x="273" y="145" width="3" height="8" fill="#fff"/>
<rect x="282" y="153" width="1" height="20" fill="#00ff00"/>
<rect x="280" y="162" width="5" height="1" fill="#00ff00"/>
<rect x="290" y="162" width="1" height="11" fill="#00ff00"/>
<rect x="288" y="162" width="5" height="11" fill="#00ff00"/>
<rect x="289" y="163" width="3" height="9" fill="#000"/>
<rect x="298" y="153" width="1" height="10" fill="#00ff00"/>
<rect x="296" y="153" width="5" height="10" fill="#00ff00"/>
<rect x="297" y="154" width="3" height="8" fill="#fff"/>
<rect x="306" y="153" width="1" height="10" fill="#00ff00"/>
<rect x="304" y="153" width="5" height="10" fill="#00ff00"/>
<rect x="305" y="154" width="3" height="8" fill="#fff"/>
<rect x="314" y="153" width="1" height="10" fill="#00ff00"/>
<rect x="312" y="153" width="5" height="10" fill="#00ff00"/>
<rect x="313" y="154" width="3" height="8" fill="#fff"/>
<rect x="322" y="134" width="1" height="20" fill="#00ff00"/>
<rect x="320" y="134" width="5" height="20" fill="#00ff00"/>
<rect x="321" y="135" width="3" height="18" fill="#000"/>
<rect x="330" y="134" width="1" height="11" fill="#00ff00"/>
<rect x="328" y="144" width="5" height="1" fill="#00ff00"/>
<rect x="336" y="134" width="5" height="1" fill="#00ff00"/>
<rect x="346" y="144" width="1" height="10" fill="#00ff00"/>
<rect x="344" y="144" width="5" height="10" fill="#00ff00"/>
<rect x="345" y="145" width="3" height="8" fill="#fff"/>
<rect x="354" y="153" width="1" height="10" fill="#00ff00"/>
<rect x="352" y="153" width="5" height="10" fill="#00ff00"/>
<rect x="353" y="154" width="3" height="8" fill="#000"/>
<rect x="360" y="144" width="5" height="1" fill="#00ff00"/>
<rect x="370" y="134" width="1" height="11" fill="#00ff00"/>
<rect x="368" y="134" width="5" height="1" fill="#00ff00"/>
<rect x="376" y="144" width="5" height="1" fill="#00ff00"/>
<rect x="386" y="144" width="1" height="10" fill="#00ff00"/>
<rect x="384" y="153" width="5" height="1" fill="#00ff00"/>
<rect x="394" y="144" width="1" height="10" fill="#00ff00"/>
<rect x="392" y="144" width="5" height="1" fill="#00ff00"/>
<rect x="402" y="153" width="1" height="10" fill="#00ff00"/>
<rect x="400" y="153" width="5" height="10" fill="#00ff00"/>
<rect x="401" y="154" width="3" height="8" fill="#fff"/>
<rect x="410" y="162" width="1" height="11" fill="#00ff00"/>
<rect x="408" y="162" width="5" height="11" fill="#00ff00"/>
<rect x="409" y="163" width="3" height="9" fill="#000"/>
<rect x="418" y="162" width="1" height="11" fill="#00ff00"/>
<rect x="416" y="172" width="5" height="1" fill="#00ff00"/>
<rect x="426" y="162" width="1" height="11" fill="#00ff00"/>
<rect x="424" y="162" width="5" height="1" fill="#00ff00"/>
<rect x="432" y="172" width="5" height="1" fill="#00ff00"/>
<rect x="442" y="162" width="1" height="11" fill="#00ff00"/>
<rect x="440" y="162" width="5" height="11" fill="#00ff00"/>
<rect x="441" y="163" width="3" height="9" fill="#fff"/>
<rect x="450" y="172" width="1" height="10" fill="#00ff00"/>
<rect x="448" y="181" width="5" height="1" fill="#00ff00"/>
<rect x="458" y="181" width="1" height="29" fill="#00ff00"/>
<rect x="456" y="191" width="5" height="19" fill="#00ff00"/>
<rect x="457" y="192" width="3" height="17" fill="#fff"/>
<rect x="466" y="191" width="1" height="19" fill="#00ff00"/>
<rect x="464" y="191" width="5" height="10" fill="#00ff00"/>
<rect x="465" y="192" width="3" height="8" fill="#000"/>
<rect x="474" y="181" width="1" height="11" fill="#00ff00"/>
<rect x="472" y="181" width="5" height="1" fill="#00ff00"/>
<rect x="482" y="181" width="1" height="11" fill="#00ff00"/>
<rect x="480" y="181" width="5" height="11" fill="#00ff00"/>
<rect x="481" y="182" width="3" height="9" fill="#000"/>
<rect x="488" y="172" width="5" height="1" fill="#00ff00"/>
<rect x="498" y="172" width="1" height="10" fill="#00ff00"/>
<rect x="496" y="181" width="5" height="1" fill="#00ff00"/>
<rect x="506" y="172" width="1" height="20" fill="#00ff00"/>
<rect x="504" y="172" width="5" height="20" fill="#00ff00"/>
<rect x="505" y="173" width="3" height="18" fill="#000"/>
<rect x="514" y="172" width="1" height="10" fill="#00ff00"/>
<rect x="512" y="172" width="5" height="10" fill="#00ff00"/>
<rect x="513" y="173" width="3" height="8" fill="#000"/>
<rect x="520" y="181" width="5" height="1" fill="#00ff00"/>
<rect x="530" y="172" width="1" height="20" fill="#00ff00"/>
<rect x="528" y="172" width="5" height="20" fill="#00ff00"/>
<rect x="529" y="173" width="3" height="18" fill="#000"/>
<rect x="538" y="172" width="1" height="10" fill="#00ff00"/>
<rect x="536" y="172" width="5" height="10" fill="#00ff00"/>
<rect x="537" y="173" width="3" height="8" fill="#000"/>
<rect x="546" y="162" width="1" height="20" fill="#00ff00"/>
<rect x="544" y="162" width="5" height="20" fill="#00ff00"/>
<rect x="545" y="163" width="3" height="18" fill="#000"/>
<rect x="554" y="162" width="1" height="20" fill="#00ff00"/>
<rect x="552" y="172" width="5" height="1" fill="#00ff00"/>
<rect x="562" y="172" width="1" height="10" fill="#00ff00"/>
<rect x="560" y="172" width="5" height="10" fill="#00ff00"/>
<rect x="561" y="173" width="3" height="8" fill="#000"/>
<rect x="570" y="172" width="1" height="10" fill="#00ff00"/>
<rect x="568" y="172" width="5" height="10" fill="#00ff00"/>
<rect x="569" y="173" width="3" height="8" fill="#000"/>
<rect x="578" y="172" width="1" height="10" fill="#00ff00"/>
<rect x="576" y="172" width="5" height="10" fill="#00ff00"/>
<rect x="577" y="173" width="3" height="8" fill="#000"/>
<rect x="586" y="172" width="1" height="10" fill="#00ff00"/>
<rect x="584" y="172" width="5" height="10" fill="#00ff00"/>
<rect x="585" y="173" width="3" height="8" fill="#000"/>
<rect x="594" y="181" width="1" height="11" fill="#00ff00"/>
<rect x="592" y="181" width="5" height="1" fill="#00ff00"/>
<rect x="602" y="181" width="1" height="11" fill="#00ff00"/>
<rect x="600" y="191" width="5" height="1" fill="#00ff00"/>
<rect x="610" y="191" width="1" height="10" fill="#00ff00"/>
<rect x="608" y="191" width="5" height="10" fill="#00ff00"/>
<rect x="609" y="192" width="3" height="8" fill="#000"/>
<rect x="616" y="181" width="5" height="1" fill="#00ff00"/>
<rect x="626" y="181" width="1" height="11" fill="#00ff00"/>
<rect x="624" y="191" width="5" height="1" fill="#00ff00"/>
<rect x="634" y="191" width="1" height="10" fill="#00ff00"/>
<rect x="632" y="191" width="5" height="10" fill="#00ff00"/>
<rect x="633" y="192" width="3" height="8" fill="#000"/>
<rect x="642" y="181" width="1" height="20" fill="#00ff00"/>
<rect x="640" y="181" width="5" height="20" fill="#00ff00"/>
<rect x="641" y="182" width="3" height="18" fill="#000"/>
<rect x="648" y="191" width="5" height="1" fill="#00ff00"/>
<rect x="656" y="200" width="5" height="1" fill="#00ff00"/>
<rect x="666" y="191" width="1" height="19" fill="#00ff00"/>
<rect x="664" y="191" width="5" height="19" fill="#00ff00"/>
<rect x="665" y="192" width="3" height="17" fill="#fff"/>
<rect x="672" y="219" width="5" height="1" fill="#00ff00"/>
<rect x="682" y="209" width="1" height="11" fill="#00ff00"/>
<rect x="680" y="209" width="5" height="1" fill="#00ff00"/>
<rect x="690" y="209" width="1" height="11" fill="#00ff00"/>
<rect x="688" y="209" width="5" height="11" fill="#00ff00"/>
<rect x="689" y="210" width="3" height="9" fill="#000"/>
<rect x="698" y="200" width="1" height="10" fill="#00ff00"/>
<rect x="696" y="200" width="5" height="1" fill="#00ff00"/>
<rect x="706" y="200" width="1" height="10" fill="#00ff00"/>
<rect x="704" y="200" width="5" height="10" fill="#00ff00"/>
<rect x="705" y="201" width="3" height="8" fill="#000"/>
<rect x="714" y="200" width="1" height="39" fill="#00ff00"/>
<rect x="712" y="209" width="5" height="30" fill="#00ff00"/>
<rect x="713" y="210" width="3" height="28" fill="#fff"/>
<rect x="722" y="219" width="1" height="20" fill="#00ff00"/>
<rect x="720" y="228" width="5" height="1" fill="#00ff00"/>
<rect x="730" y="219" width="1" height="20" fill="#00ff00"/>
<rect x="728" y="219" width="5" height="20" fill="#00ff00"/>
<rect x="729" y="220" width="3" height="18" fill="#fff"/>
<rect x="738" y="219" width="1" height="20" fill="#00ff00"/>
<rect x="736" y="219" width="5" height="10" fill="#00ff00"/>
<rect x="737" y="220" width="3" height="8" fill="#000"/>
<rect x="746" y="219" width="1" height="20" fill="#00ff00"/>
<rect x="744" y="228" width="5" height="1" fill="#00ff00"/>
<rect x="754" y="209" width="1" height="20" fill="#00ff00"/>
<rect x="752" y="219" width="5" height="1" fill="#00ff00"/>
<rect x="762" y="200" width="1" height="20" fill="#00ff00"/>
<rect x="760" y="200" width="5" height="10" fill="#00ff00"/>
<rect x="761" y="201" width="3" height="8" fill="#000"/>
<rect x="770" y="191" width="1" height="29" fill="#00ff00"/>
<rect x="768" y="191" width="5" height="29" fill="#00ff00"/>
<rect x="769" y="192" width="3" height="27" fill="#fff"/>
<rect x="778" y="209" width="1" height="11" fill="#00ff00"/>
<rect x="776" y="209" width="5" height="11" fill="#00ff00"/>
<rect x="777" y="210" width="3" height="9" fill="#fff"/>
<rect x="786" y="219" width="1" height="10" fill="#00ff00"/>
<rect x="784" y="219" width="5" height="10" fill="#00ff00"/>
<rect x="785" y="220" width="3" height="8" fill="#000"/>
<rect x="794" y="219" width="1" height="20" fill="#00ff00"/>
<rect x="792" y="228" width="5" height="11" fill="#00ff00"/>
<rect x="793" y="229" width="3" height="9" fill="#fff"/>
<rect x="802" y="228" width="1" height="20" fill="#00ff00"/>
<rect x="800" y="238" width="5" height="10" fill="#00ff00"/>
<rect x="801" y="239" width="3" height="8" fill="#000"/>
<rect x="810" y="228" width="1" height="11" fill="#00ff00"/>
<rect x="808" y="228" width="5" height="1" fill="#00ff00"/>
<rect x="818" y="219" width="1" height="10" fill="#00ff00"/>
<rect x="816" y="219" width="5" height="10" fill="#00ff00"/>
<rect x="817" y="220" width="3" height="8" fill="#fff"/>
<rect x="826" y="238" width="1" height="10" fill="#00ff00"/>
<rect x="824" y="238" width="5" height="1" fill="#00ff00"/>
<polyline points="266.5,330.5 274.5,329.0 282.5,329.0 290.5,339.5 298.5,334.0 306.5,332.6 314.5,329.0 322.5,325.6 330.5,325.2 338.5,324.2 346.5,329.0 354.5,323.2 362.5,321.3 370.5,316.4 378.5,317.8 386.5,320.3 394.5,315.0 402.5,318.4 410.5,322.3 418.5,326.2 426.5,325.2 434.5,326.2 442.5,322.3 450.5,322.9 458.5,325.2 466.5,323.8 474.5,326.2 482.5,326.2 490.5,322.9 498.5,327.5 506.5,326.2 514.5,322.3 522.5,319.3 530.5,318.4 538.5,315.8 546.5,317.0 554.5,317.0 562.5,313.5 570.5,314.5 578.5,316.4 586.5,316.4 594.5,320.3 602.5,320.3 610.5,321.3 618.5,322.3 626.5,326.2 634.5,331.0 642.5,332.6 650.5,341.2 658.5,339.9 666.5,341.2 674.5,341.2 682.5,337.3 690.5,337.3 698.5,333.4 706.5,331.5 714.5,335.0 722.5,337.3 730.5,338.5 738.5,334.0 746.5,338.9 754.5,334.0 762.5,328.1 770.5,330.0 778.5,330.0 786.5,333.0 794.5,334.0 802.5,337.9 810.5,336.5 818.5,334.6 826.5,333.0" fill="none" stroke="#32cd32" stroke-width="1" shape-rendering="crispEdges"/>
<polyline points="266.5,335.4 274.5,330.5 282.5,343.4 290.5,338.9 298.5,323.2 306.5,321.3 314.5,324.8 322.5,310.5 330.5,297.3 338.5,297.3 346.5,310.5 354.5,323.2 362.5,331.0 370.5,313.5 378.5,318.4 386.5,326.2 394.5,315.0 402.5,319.3 410.5,333.0 418.5,335.4 426.5,324.8 434.5,335.4 442.5,323.2 450.5,321.3 458.5,322.9 466.5,323.8 474.5,320.3 482.5,330.0 490.5,321.3 498.5,311.5 506.5,319.3 514.5,323.2 522.5,327.2 530.5,315.0 538.5,302.2 546.5,300.2 554.5,311.0 562.5,312.9 570.5,316.4 578.5,322.3 586.5,348.2 594.5,348.2 602.5,348.2 610.5,348.2 618.5,343.2 626.5,345.1 634.5,345.1 642.5,335.4 650.5,334.0 658.5,337.9 666.5,336.5 674.5,335.4 682.5,335.0 690.5,333.4 698.5,324.2 706.5,305.7 714.5,330.0 722.5,339.9 730.5,343.8 738.5,341.2 746.5,343.2 754.5,332.0 762.5,322.3 770.5,323.2 778.5,327.2 786.5,325.2 794.5,334.0 802.5,348.2 810.5,343.8 818.5,339.9 826.5,337.9" fill="none" stroke="#ff0000" stroke-width="1" shape-rendering="crispEdges"/>
<polyline points="266.5,382.2 274.5,384.1 282.5,384.1 290.5,382.2 298.5,387.0 306.5,391.4 314.5,393.3 322.5,390.0 330.5,393.3 338.5,393.3 346.5,395.3 354.5,393.3 362.5,393.3 370.5,386.5 378.5,386.5 386.5,393.3 394.5,386.5 402.5,388.4 410.5,383.2 418.5,387.0 426.5,383.2 434.5,383.2 442.5,390.0 450.5,394.9 458.5,400.7 466.5,397.2 474.5,394.9 482.5,391.4 490.5,391.4 498.5,394.5 506.5,389.4 514.5,387.5 522.5,387.5 530.5,383.2 538.5,379.2 546.5,372.4 554.5,372.4 562.5,371.4 570.5,367.1 578.5,365.6 586.5,363.6 594.5,360.1 602.5,363.2 610.5,361.3 618.5,361.3 626.5,368.1 634.5,366.6 642.5,363.2 650.5,363.2 658.5,363.2 666.5,368.1 674.5,368.1 682.5,365.2 690.5,363.2 698.5,360.7 706.5,355.8 714.5,364.6 722.5,364.6 730.5,372.4 738.5,369.5 746.5,369.5 754.5,369.5 762.5,359.7 770.5,369.5 778.5,371.4 786.5,363.2 794.5,369.5 802.5,369.5 810.5,366.6 818.5,370.5 826.5,367.5" fill="none" stroke="#00b4f0" stroke-width="1" shape-rendering="crispEdges"/>
<polyline points="266.5,419.6 274.5,419.6 282.5,425.0 290.5,425.0 298.5,425.0 306.5,425.0 314.5,425.0 322.5,421.2 330.5,425.5 338.5,424.1 346.5,426.4 354.5,426.4 362.5,425.0 370.5,416.3 378.5,417.0 386.5,426.4 394.5,417.3 402.5,420.6 410.5,420.6 418.5,426.4 426.5,420.6 434.5,421.6 442.5,421.6 450.5,427.0 458.5,436.2 466.5,431.3 474.5,427.4 482.5,427.4 490.5,426.0 498.5,430.3 506.5,424.5 514.5,424.5 522.5,425.5 530.5,419.6 538.5,419.6 546.5,410.4 554.5,416.3 562.5,416.3 570.5,416.3 578.5,416.3 586.5,416.3 594.5,420.2 602.5,424.5 610.5,424.5 618.5,422.5 626.5,431.3 634.5,431.3 642.5,427.4 650.5,429.4 658.5,430.9 666.5,436.2 674.5,437.6 682.5,434.2 690.5,434.2 698.5,430.3 706.5,430.3 714.5,442.0 722.5,436.6 730.5,447.3 738.5,442.6 746.5,456.1 754.5,446.0 762.5,435.2 770.5,447.3 778.5,447.3 786.5,447.3 794.5,455.3 802.5,455.3 810.5,451.0 818.5,451.0 826.5,454.2" fill="none" stroke="#00b4f0" stroke-width="1" shape-rendering="crispEdges"/>
<rect x="266" y="510" width="1" height="2" fill="#ff0000"/>
<rect x="274" y="508" width="1" height="4" fill="#008000"/>
<rect x="282" y="499" width="1" height="13" fill="#008000"/>
<rect x="290" y="508" width="1" height="4" fill="#ff0000"/>
<rect x="298" y="496" width="1" height="16" fill="#008000"/>
<rect x="306" y="502" width="1" height="10" fill="#ff0000"/>
<rect x="314" y="508" width="1" height="4" fill="#ff0000"/>
<rect x="322" y="505" width="1" height="7" fill="#008000"/>
<rect x="330" y="505" width="1" height="7" fill="#008000"/>
<rect x="338" y="510" width="1" height="2" fill="#ff0000"/>
<rect x="346" y="508" width="1" height="4" fill="#008000"/>
<rect x="354" y="508" width="1" height="4" fill="#008000"/>
<rect x="362" y="510" width="1" height="2" fill="#ff0000"/>
<rect x="370" y="493" width="1" height="19" fill="#008000"/>
<rect x="378" y="510" width="1" height="2" fill="#ff0000"/>
<rect x="386" y="493" width="1" height="19" fill="#008000"/>
<rect x="394" y="493" width="1" height="19" fill="#008000"/>
<rect x="402" y="508" width="1" height="4" fill="#ff0000"/>
<rect x="410" y="496" width="1" height="16" fill="#008000"/>
<rect x="418" y="499" width="1" height="13" fill="#ff0000"/>
<rect x="426" y="499" width="1" height="13" fill="#ff0000"/>
<rect x="434" y="510" width="1" height="2" fill="#ff0000"/>
<rect x="442" y="490" width="1" height="22" fill="#008000"/>
<rect x="450" y="499" width="1" height="13" fill="#ff0000"/>
<rect x="458" y="493" width="1" height="19" fill="#008000"/>
<rect x="466" y="502" width="1" height="10" fill="#ff0000"/>
<rect x="474" y="505" width="1" height="7" fill="#ff0000"/>
<rect x="482" y="502" width="1" height="10" fill="#008000"/>
<rect x="490" y="510" width="1" height="2" fill="#ff0000"/>
<rect x="498" y="505" width="1" height="7" fill="#008000"/>
<rect x="506" y="499" width="1" height="13" fill="#008000"/>
<rect x="514" y="508" width="1" height="4" fill="#ff0000"/>
<rect x="522" y="510" width="1" height="2" fill="#ff0000"/>
<rect x="530" y="499" width="1" height="13" fill="#008000"/>
<rect x="538" y="502" width="1" height="10" fill="#ff0000"/>
<rect x="546" y="493" width="1" height="19" fill="#008000"/>
<rect x="554" y="499" width="1" height="13" fill="#ff0000"/>
<rect x="562" y="508" width="1" height="4" fill="#ff0000"/>
<rect x="570" y="502" width="1" height="10" fill="#008000"/>
<rect x="578" y="508" width="1" height="4" fill="#ff0000"/>
<rect x="586" y="508" width="1" height="4" fill="#ff0000"/>
<rect x="594" y="505" width="1" height="7" fill="#008000"/>
<rect x="602" y="505" width="1" height="7" fill="#008000"/>
<rect x="610" y="508" width="1" height="4" fill="#ff0000"/>
<rect x="618" y="510" width="1" height="2" fill="#ff0000"/>
<rect x="626" y="493" width="1" height="19" fill="#008000"/>
<rect x="634" y="508" width="1" height="4" fill="#ff0000"/>
<rect x="642" y="505" width="1" height="7" fill="#008000"/>
<rect x="650" y="510" width="1" height="2" fill="#ff0000"/>
<rect x="658" y="510" width="1" height="2" fill="#ff0000"/>
<rect x="666" y="499" width="1" height="13" fill="#008000"/>
<rect x="674" y="510" width="1" height="2" fill="#ff0000"/>
<rect x="682" y="505" width="1" height="7" fill="#008000"/>
<rect x="690" y="508" width="1" height="4" fill="#ff0000"/>
<rect x="698" y="505" width="1" height="7" fill="#008000"/>
<rect x="706" y="496" width="1" height="16" fill="#008000"/>
<rect x="714" y="484" width="1" height="28" fill="#008000"/>
<rect x="722" y="499" width="1" height="13" fill="#ff0000"/>
<rect x="730" y="487" width="1" height="25" fill="#008000"/>
<rect x="738" y="502" width="1" height="10" fill="#ff0000"/>
<rect x="746" y="481" width="1" height="31" fill="#008000"/>
<rect x="754" y="493" width="1" height="19" fill="#ff0000"/>
<rect x="762" y="484" width="1" height="28" fill="#008000"/>
<rect x="770" y="484" width="1" height="28" fill="#008000"/>
<rect x="778" y="508" width="1" height="4" fill="#ff0000"/>
<rect x="786" y="490" width="1" height="22" fill="#008000"/>
<rect x="794" y="496" width="1" height="16" fill="#ff0000"/>
<rect x="802" y="466" width="1" height="46" fill="#008000"/>
<rect x="810" y="505" width="1" height="7" fill="#ff0000"/>
<rect x="818" y="502" width="1" height="10" fill="#008000"/>
<rect x="826" y="505" width="1" height="7" fill="#ff0000"/>
<path d="M265.5 294.5V105.5H981.5V294.5" fill="none" stroke="#fff"/>
<line x1="265" y1="294.5" x2="982" y2="294.5" stroke="#fff"/>
<path d="M265.5 349.5V296.5H981.5V349.5" fill="none" stroke="#fff"/>
<line x1="265" y1="349.5" x2="982" y2="349.5" stroke="#fff"/>
<path d="M265.5 404.5V351.5H981.5V404.5" fill="none" stroke="#fff"/>
<line x1="265" y1="404.5" x2="982" y2="404.5" stroke="#fff"/>
<path d="M265.5 459.5V406.5H981.5V459.5" fill="none" stroke="#fff"/>
<line x1="265" y1="459.5" x2="982" y2="459.5" stroke="#fff"/>
<path d="M265.5 513.5V461.5H981.5V513.5" fill="none" stroke="#fff"/>
<line x1="265" y1="513.5" x2="982" y2="513.5" stroke="#fff"/>
<rect x="266" y="514" width="1" height="3" fill="#fff"/>
<text x="265" y="526">8 Mar 2011</text>
<rect x="330" y="514" width="1" height="3" fill="#fff"/>
<text x="329" y="526">8 Mar 06:16</text>
<rect x="394" y="514" width="1" height="3" fill="#fff"/>
<text x="393" y="526">8 Mar 06:29</text>
<rect x="458" y="514" width="1" height="3" fill="#fff"/>
<text x="457" y="526">8 Mar 06:38</text>
<rect x="522" y="514" width="1" height="3" fill="#fff"/>
<text x="521" y="526">8 Mar 06:48</text>
<rect x="586" y="514" width="1" height="3" fill="#fff"/>
<text x="585" y="526">8 Mar 06:56</text>
<rect x="650" y="514" width="1" height="3" fill="#fff"/>
<text x="649" y="526">8 Mar 07:06</text>
<rect x="714" y="514" width="1" height="3" fill="#fff"/>
<text x="713" y="526">8 Mar 07:14</text>
<rect x="778" y="514" width="1" height="3" fill="#fff"/>
<text x="777" y="526">8 Mar 07:22</text>
<rect x="982" y="107" width="2" height="1" fill="#fff"/>
<text x="987" y="110.5">1.3990</text>
<rect x="982" y="153" width="2" height="1" fill="#fff"/>
<text x="987" y="156.5">1.3985</text>
<rect x="982" y="200" width="2" height="1" fill="#fff"/>
<text x="987" y="203.5">1.3980</text>
<rect x="982" y="247" width="2" height="1" fill="#fff"/>
<text x="987" y="250.5">1.3975</text>
<rect x="984" y="231" width="35" height="12" fill="#fff"/>
<text x="987" y="240.5" fill="#000">1.3976</text>
<text x="985.5" y="306.5">100</text>
<text x="984" y="310.5">80</text>
<text x="984" y="325.5">50</text>
<text x="984" y="340.5">20</text>
<text x="984" y="346.5">0</text>
<text x="984" y="362.0">-501</text>
<text x="984" y="401.0">-556</text>
<text x="984" y="417.0">312</text>
<text x="984" y="455.5">271</text>
<text x="984" y="472.0">18</text>
<text x="984" y="510.0">0</text>
<rect x="268" y="108" width="185" height="11" fill="#000"/>
<text y="116.5"><tspan x="269.5">EURUSD,M1</tspan><tspan x="331.5">1.3976</tspan><tspan x="362.7">1.3976</tspan><tspan x="394">1.3975</tspan><tspan x="424.6">1.3976</tspan></text>
<rect x="270" y="189" width="65" height="10" fill="#000"/><text x="271" y="197.5">#14885615 sell</text>
<text y="309.5"><tspan x="270">MFI(13)</tspan><tspan x="305.5">29.7889</tspan><tspan x="345.5">MFI(5)</tspan><tspan x="377">21.2132</tspan></text>
<text x="269" y="364.5">A/D -517</text>
<text x="269" y="419.5">OBV 274</text>
<text x="269" y="474.5">Volumes 3</text>
<path d="M832 106h9.500l-4.750 5z" fill="#8494a6" shape-rendering="auto"/>
</svg>
<div class="a" style="left:262px;top:534px;width:1px;height:18px;background:#7c7c84"></div><div class="a" style="left:263px;top:533px;width:758px;height:19px;font-size:11px;color:#858cb2;letter-spacing:-.7px">
<div class="a" style="left:-2px;top:0;width:760px;height:1px;background:#fff"></div>
<div class="a" style="left:12px;top:4px">GBPUSD,M5</div>
<div class="a" style="left:92px;top:4px">USDCHF,Daily</div>
<div class="a" style="left:181px;top:4px">GBPCHF,M1</div>
<div class="a" style="left:261px;top:4px">USDCHF,M1</div>
<div class="a" style="left:341px;top:4px">GBPJPY,M1</div>
<div class="a" style="left:417px;top:4px">EURUSD,M5</div>
<div class="a" style="left:82px;top:2px;width:1px;height:13px;background:#8890b8"></div>
<div class="a" style="left:170px;top:2px;width:1px;height:13px;background:#8890b8"></div>
<div class="a" style="left:250px;top:2px;width:1px;height:13px;background:#8890b8"></div>
<div class="a" style="left:330px;top:2px;width:1px;height:13px;background:#8890b8"></div>
<div class="a" style="left:406px;top:2px;width:1px;height:13px;background:#8890b8"></div>
<div class="a" style="left:486px;top:0;width:80px;height:19px;background:#fff;border:1px solid #000;border-top:none;color:#000;text-align:center;padding-top:4px">EURUSD,M1</div>
<div class="a" style="left:731px;top:5px;width:0;height:0;border:4px solid transparent;border-right:5px solid #9aa2c6;border-left:none"></div>
<div class="a" style="left:748px;top:5px;width:0;height:0;border:4px solid transparent;border-left:5px solid #9aa2c6;border-right:none"></div>
</div>
<div class="a hl" style="left:0;top:553px;width:1023px"></div>
<div class="a term" style="left:0;top:556px;width:1023px;height:158px">
<div class="a" style="left:0;top:15px;width:13px;height:143px;background:#23449a"></div>
<div class="a" style="left:3px;top:4px"><svg width="7" height="6" style="display:block"><path d="M.8 .5L6.200 5.500M6.200 .5L.8 5.500" stroke="#000" stroke-width="1.700"/></svg></div>
<div class="a" style="left:1px;top:157px;color:#fff;font-size:12px;line-height:13px;height:13px;transform-origin:0 0;transform:rotate(-90deg)">终端</div>
<div class="a" style="left:14px;top:1px;width:1006px;height:137px;background:#fff;border-top:1px solid #aab2dc"></div>
<div class="a hdr cj" style="left:15px;top:2px;width:1004px;height:20px;border-bottom:1px solid #dedede">
<div class="a" style="left:6px;top:4px">定单</div><div class="a" style="left:41px;top:5px;color:#666;font-size:9px">/</div>
<div class="a" style="left:98px;top:1px;width:1px;height:17px;background:#dcdcd8"></div>
<div class="a r" style="left:98px;width:163px;top:4px">时间</div>
<div class="a" style="left:267px;top:1px;width:1px;height:17px;background:#dcdcd8"></div>
<div class="a r" style="left:267px;width:62px;top:4px">类型</div>
<div class="a" style="left:335px;top:1px;width:1px;height:17px;background:#dcdcd8"></div>
<div class="a r" style="left:335px;width:46px;top:4px">手数</div>
<div class="a" style="left:387px;top:1px;width:1px;height:17px;background:#dcdcd8"></div>
<div class="a r" style="left:387px;width:62px;top:4px">商品</div>
<div class="a" style="left:455px;top:1px;width:1px;height:17px;background:#dcdcd8"></div>
<div class="a r" style="left:455px;width:70px;top:4px">价位</div>
<div class="a" style="left:531px;top:1px;width:1px;height:17px;background:#dcdcd8"></div>
<div class="a r" style="left:531px;width:70px;top:4px">止损</div>
<div class="a" style="left:607px;top:1px;width:1px;height:17px;background:#dcdcd8"></div>
<div class="a r" style="left:607px;width:70px;top:4px">获利</div>
<div class="a" style="left:683px;top:1px;width:1px;height:17px;background:#dcdcd8"></div>
<div class="a r" style="left:683px;width:70px;top:4px">价位</div>
<div class="a" style="left:759px;top:1px;width:1px;height:17px;background:#dcdcd8"></div>
<div class="a r" style="left:759px;width:70px;top:4px">佣金</div>
<div class="a" style="left:835px;top:1px;width:1px;height:17px;background:#dcdcd8"></div>
<div class="a r" style="left:835px;width:70px;top:4px">利息</div>
<div class="a" style="left:911px;top:1px;width:1px;height:17px;background:#dcdcd8"></div>
<div class="a r" style="left:911px;width:87px;top:4px">获利</div>
</div>
<div class="a row" style="left:15px;top:22px;width:1004px;height:20px;background:#9db5ea;color:#14387e"><svg class="a" style="left:4px;top:3px" width="15" height="16"><path d="M.5 .5h7l3 3v10h-10z" fill="#fbfbf6" stroke="#8a8a80"/><circle cx="10" cy="11.500" r="3.200" fill="#e8401c" stroke="#b02a10" stroke-width=".600"/></svg>
<div class="a" style="left:25px;top:6px">14885615</div>
<div class="a" style="left:98px;top:0;width:169px;height:20px;border-left:1px solid #c4cce4"></div>
<div class="a r" style="left:98px;width:165px;top:6px">2011.03.08 06:38</div>
<div class="a" style="left:267px;top:0;width:68px;height:20px;border-left:1px solid #c4cce4"></div>
<div class="a r" style="left:267px;width:64px;top:6px">sell</div>
<div class="a" style="left:335px;top:0;width:52px;height:20px;border-left:1px solid #c4cce4"></div>
<div class="a r" style="left:335px;width:48px;top:6px">0.10</div>
<div class="a" style="left:387px;top:0;width:68px;height:20px;border-left:1px solid #c4cce4"></div>
<div class="a r" style="left:387px;width:64px;top:6px">eurusd</div>
<div class="a" style="left:455px;top:0;width:76px;height:20px;border-left:1px solid #c4cce4"></div>
<div class="a r" style="left:455px;width:72px;top:6px">1.3980</div>
<div class="a" style="left:531px;top:0;width:76px;height:20px;border-left:1px solid #c4cce4;background:#ffa4a4"></div>
<div class="a r" style="left:531px;width:72px;top:6px;color:#000">1.3985</div>
<div class="a" style="left:607px;top:0;width:76px;height:20px;border-left:1px solid #c4cce4"></div>
<div class="a r" style="left:607px;width:72px;top:6px">0.0000</div>
<div class="a" style="left:683px;top:0;width:76px;height:20px;border-left:1px solid #c4cce4"></div>
<div class="a r" style="left:683px;width:72px;top:6px">1.3978</div>
<div class="a" style="left:759px;top:0;width:76px;height:20px;border-left:1px solid #c4cce4"></div>
<div class="a r" style="left:759px;width:72px;top:6px">0.00</div>
<div class="a" style="left:835px;top:0;width:76px;height:20px;border-left:1px solid #c4cce4"></div>
<div class="a r" style="left:835px;width:72px;top:6px">0.00</div>
<div class="a" style="left:911px;top:0;width:93px;height:20px;border-left:1px solid #c4cce4"></div>
<div class="a r" style="left:911px;width:89px;top:6px">0.00</div>
</div>
<div class="a" style="left:15px;top:42px;width:1004px;height:20px;background:#d9d9d9;font-weight:bold;font-size:12px"><svg class="a" style="left:4px;top:3px" width="13" height="14"><rect x=".5" y=".5" width="11" height="12" rx="1" fill="#fff" stroke="#9a9a9a"/><path d="M6 3l3.500 3.500h-2v3h-3v-3h-2z" fill="#22b422" stroke="#128a12" stroke-width=".600"/></svg><div class="a" style="left:25px;top:4px;letter-spacing:.45px">余额: 76.48  净值: 78.48  已用保证金: 27.96  可用保证金: 50.52  保证金比例: 280.69%</div><div class="a r" style="left:900px;width:99px;top:4px;font-size:11px">2.00</div></div>
<div class="a" style="left:61px;top:138px;width:958px;height:1px;background:#000"></div>
<div class="a tabact" style="left:17px;top:138px;width:44px;height:18px;padding-top:3px">交易</div>
<div class="a gray" style="left:70px;top:142px">账户历史</div>
<div class="a gray" style="left:138px;top:142px">新闻</div>
<div class="a gray" style="left:183px;top:142px">警报</div>
<div class="a gray" style="left:227px;top:142px">邮箱</div>
<div class="a gray" style="left:272px;top:142px">日志</div>
<div class="a gray" style="left:128px;top:141px">|</div>
<div class="a gray" style="left:172px;top:141px">|</div>
<div class="a gray" style="left:216px;top:141px">|</div>
<div class="a gray" style="left:261px;top:141px">|</div>
<div class="a gray" style="left:304px;top:141px">|</div>
</div>
<div class="a" style="left:0;top:714px;width:1023px;height:1px;background:#e6e9fb"></div><div class="a hl" style="left:0;top:718px;width:1023px"></div>
<div class="a" style="left:0;top:718px;width:1023px;height:20px;font-size:11px">
<div class="a cj" style="left:0;top:6px;font-size:12px">寻求帮助,请按F1键</div><div class="a" style="left:318px;top:7px">Default</div>
<div class="a vl" style="left:314px;top:3px;height:17px"></div>
<div class="a vl" style="left:421px;top:3px;height:17px"></div>
<div class="a vl" style="left:519px;top:3px;height:17px"></div>
<div class="a vl" style="left:590px;top:3px;height:17px"></div>
<div class="a vl" style="left:658px;top:3px;height:17px"></div>
<div class="a vl" style="left:726px;top:3px;height:17px"></div>
<div class="a vl" style="left:795px;top:3px;height:17px"></div>
<div class="a vl" style="left:861px;top:3px;height:17px"></div>
<svg class="a" style="left:867px;top:6px" width="24" height="13"><rect x="0" y="1" width="2" height="9" fill="#6a8e23"/><rect x="0" y="10" width="2" height="2" fill="#c81e1e"/><rect x="3" y="1" width="2" height="8" fill="#6a8e23"/><rect x="3" y="9" width="2" height="3" fill="#c81e1e"/><rect x="6" y="1" width="2" height="7" fill="#6a8e23"/><rect x="6" y="8" width="2" height="4" fill="#c81e1e"/><rect x="9" y="1" width="2" height="7" fill="#6a8e23"/><rect x="9" y="8" width="2" height="4" fill="#c81e1e"/><rect x="12" y="0" width="2" height="7" fill="#6a8e23"/><rect x="12" y="7" width="2" height="5" fill="#c81e1e"/><rect x="15" y="0" width="2" height="6" fill="#6a8e23"/><rect x="15" y="6" width="2" height="6" fill="#c81e1e"/><rect x="18" y="0" width="2" height="6" fill="#6a8e23"/><rect x="18" y="6" width="2" height="6" fill="#c81e1e"/><rect x="21" y="0" width="2" height="5" fill="#6a8e23"/><rect x="21" y="5" width="2" height="7" fill="#c81e1e"/></svg>
<div class="a" style="left:919px;top:7px">338/5 kb</div>
<svg class="a" style="left:1008px;top:6px" width="13" height="13"><path d="M13 1L1 13M13 5L5 13M13 9L9 13" stroke="#fff" stroke-width="1.200"/><path d="M13 2.200L2.200 13M13 6.200L6.200 13M13 10.200L10.200 13" stroke="#9aa2cc" stroke-width="1.400"/></svg>
</div>
<div class="a" style="left:0;top:738px;width:1024px;height:30px;background:linear-gradient(#3c64aa 0,#3c64aa 1px,#86a6e4 1px,#86a6e4 2px,#5a86d2 2px,#4672c4 6px,#3a62b6 12px,#24428e 13px,#20398a 18px,#1c3282 30px)">
<svg class="a" style="left:9px;top:0px" width="46" height="30"><defs><radialGradient id="og" cx=".5" cy=".3" r=".75"><stop offset="0" stop-color="#78b4f0"/><stop offset=".45" stop-color="#3a7ed8"/><stop offset=".8" stop-color="#1c4aa8"/><stop offset="1" stop-color="#0c2a78"/></radialGradient></defs><circle cx="23" cy="20.500" r="20" fill="url(#og)" stroke="#0c2060" stroke-width="1.600"/><circle cx="23" cy="20.500" r="18.300" fill="none" stroke="#8ab8f0" stroke-width="1" opacity=".6"/><path d="M13.500 9.500c3.200-2.400 6.500-2.400 9.700 0l-2 8.500c-3.200-2.200-6.400-2.200-9.700 0z" fill="#f0582a"/><path d="M24.500 10c3.200 2.200 6.500 2.200 9.700 0l-2 8.500c-3.200 2.200-6.400 2.200-9.700 0z" fill="#7cc83c"/><path d="M11 20c3.200-2.400 6.500-2.400 9.700 0l-2 9c-3.200-2.200-6.400-2.200-9.700 0z" fill="#4a9af0"/><path d="M22 20.500c3.200 2.200 6.500 2.200 9.700 0l-2 9c-3.200 2.200-6.400 2.200-9.700 0z" fill="#fcd030"/></svg><svg class="a" style="left:64px;top:6px" width="90" height="18" font-family="'Liberation Sans',sans-serif"><text x="4" y="15" font-size="19px" font-weight="bold" font-style="italic" fill="#52b0f4">e</text><path d="M3.500 15c-3-3 6-13 14-12" stroke="#4aa0e8" fill="none" stroke-width="1.300"/><circle cx="35" cy="8.500" r="7" fill="#f4921c" stroke="#b45c0c"/><circle cx="35" cy="10" r="4.500" fill="#fbe4c0"/><circle cx="32" cy="9.500" r="1.400" fill="#111"/><circle cx="38" cy="9.500" r="1.400" fill="#111"/><rect x="50" y="1" width="16" height="16" fill="#0808f8"/><path d="M53 4h3v2h-3zM58 6h2v2h-2zM61 3h2v6h-2zM54 10h2v4h-2zM59 10h5v4h-5z" fill="#38d0f0"/><path d="M60 11h3v2h-3z" fill="#0808f8"/><path d="M80 6.500l3 2.500l-3 2.500" stroke="#fff" fill="none" stroke-width="1.400"/></svg>
<div class="a tb" style="left:157px;top:2px;width:154px;background:linear-gradient(#1e3684,#1a2f7a 50%,#1b317e);border-color:#3a58a8"><svg class="a" style="left:8px;top:4px" width="12" height="18"><path d="M4 1h6v13h-4v3h-4v-12h2z" fill="#2f8fd8"/><path d="M5 2h4v6h-4z" fill="#3fa8e8"/></svg><span style="left:24px">8081: MetaTrader N...</span></div>
<div class="a tb" style="left:315px;top:2px;width:153px"><svg class="a" style="left:4px;top:5px" width="16" height="14"><g fill="#e02020"><path d="M4 0l2.500 2.500l-2.500 2.500l-2.500-2.500z"/><path d="M11 0l2.500 2.500l-2.500 2.500l-2.500-2.500z"/><path d="M7.500 3.500l2.500 2.500l-2.500 2.500l-2.500-2.500z"/><path d="M4 7l2.500 2.500l-2.500 2.500l-2.500-2.500z"/><path d="M11 7l2.500 2.500l-2.500 2.500l-2.500-2.500z"/><path d="M0 3.500l2 2.500l-2 2.500z"/><path d="M15 3.500l-2 2.500l2 2.500z"/></g></svg><span style="left:23px;letter-spacing:-.45px">CJR2000!Sempron至...</span></div>
<div class="a tb" style="left:473px;top:2px;width:154px"><svg class="a" style="left:4px;top:4px" width="18" height="17"><path d="M4.500 .5h8l4 4v11.500h-12z" fill="#fff" stroke="#888"/><text x="0" y="12" font-size="12px" font-weight="bold" font-style="italic" fill="#2a7ae0" font-family="'Liberation Sans',sans-serif">e</text></svg><span style="left:24px">2011 03 08eur usd...</span></div>
<div class="a tb" style="left:631px;top:2px;width:155px"><svg class="a" style="left:4px;top:4px" width="17" height="17"><rect width="17" height="17" fill="#f8f4e0"/><circle cx="8.500" cy="8.500" r="7" fill="#f0a020" stroke="#3a9a3a" stroke-width="1.500"/><text x="4" y="11.500" font-size="7px" font-weight="bold" fill="#fff" font-family="'Liberation Sans',sans-serif">HY</text></svg><span style="left:24px">2009219158: HY Tr...</span></div>
<div class="a" style="left:808px;top:0;width:216px;height:30px;background:linear-gradient(#3c64aa 0,#3c64aa 1px,#b4c8eb 1px,#b4c8eb 2px,#8aaae6 2px,#6690dc 6px,#4a76cc 12px,#2c48a2 13px,#27409a 20px,#233a94 30px)"></div><svg class="a" style="left:793px;top:3px" width="16" height="24"><rect x="1" y="1" width="14" height="22" rx="2" fill="#f4f8fc" stroke="#3c96e6" stroke-width="2"/><path d="M4 6.500h1M6 6.500h1M8 6.500h1M10 6.500h1M12 6.500h1" stroke="#444"/><rect x="3.500" y="9.500" width="10" height="8" fill="#fff" stroke="#333"/><path d="M5 12.500h7M5 14.500h7" stroke="#333" stroke-dasharray="1 1"/></svg><div class="a" style="left:816px;top:8px;color:#fff;font-size:12px">我的电脑</div><svg class="a" style="left:870px;top:9px" width="40" height="12"><path d="M5.500 3l2.500 2.500l-2.500 2.500" stroke="#fff" fill="none" stroke-width="1.400"/><path d="M28 2l-3.500 3.500l3.500 3.500" stroke="#fff" fill="none" stroke-width="1.800"/></svg><svg class="a" style="left:910px;top:5px" width="50" height="20"><g><ellipse cx="8" cy="15" rx="6" ry="3.500" fill="#ccc" stroke="#333"/><ellipse cx="8" cy="9" rx="4.500" ry="3" fill="#ddd" stroke="#333"/><circle cx="8" cy="4.500" r="3" fill="#eee" stroke="#333"/></g><path d="M18 7l6-2.500l4 3l-1 6.500l-7 1l-3-4z" fill="#f4e010" stroke="#222" stroke-width="1.200" stroke-dasharray="1.500 1"/><path d="M24 4v11M20 6l8 7M28 6l-8 7" stroke="#f4e010" stroke-width="1.200"/><rect x="33" y="3" width="10" height="9" fill="#8ac0f0" stroke="#3a6ab0"/><rect x="29" y="7" width="10" height="9" fill="#a8d4f8" stroke="#3a6ab0"/><path d="M31 18h8" stroke="#ccd" stroke-width="1.500"/></svg><div class="a" style="left:965px;top:8px;width:12px;height:12px;background:#ffff00"></div><div class="a" style="left:986px;top:8px;color:#fff;font-size:11px">14:28</div>
</div>
</body></html>
